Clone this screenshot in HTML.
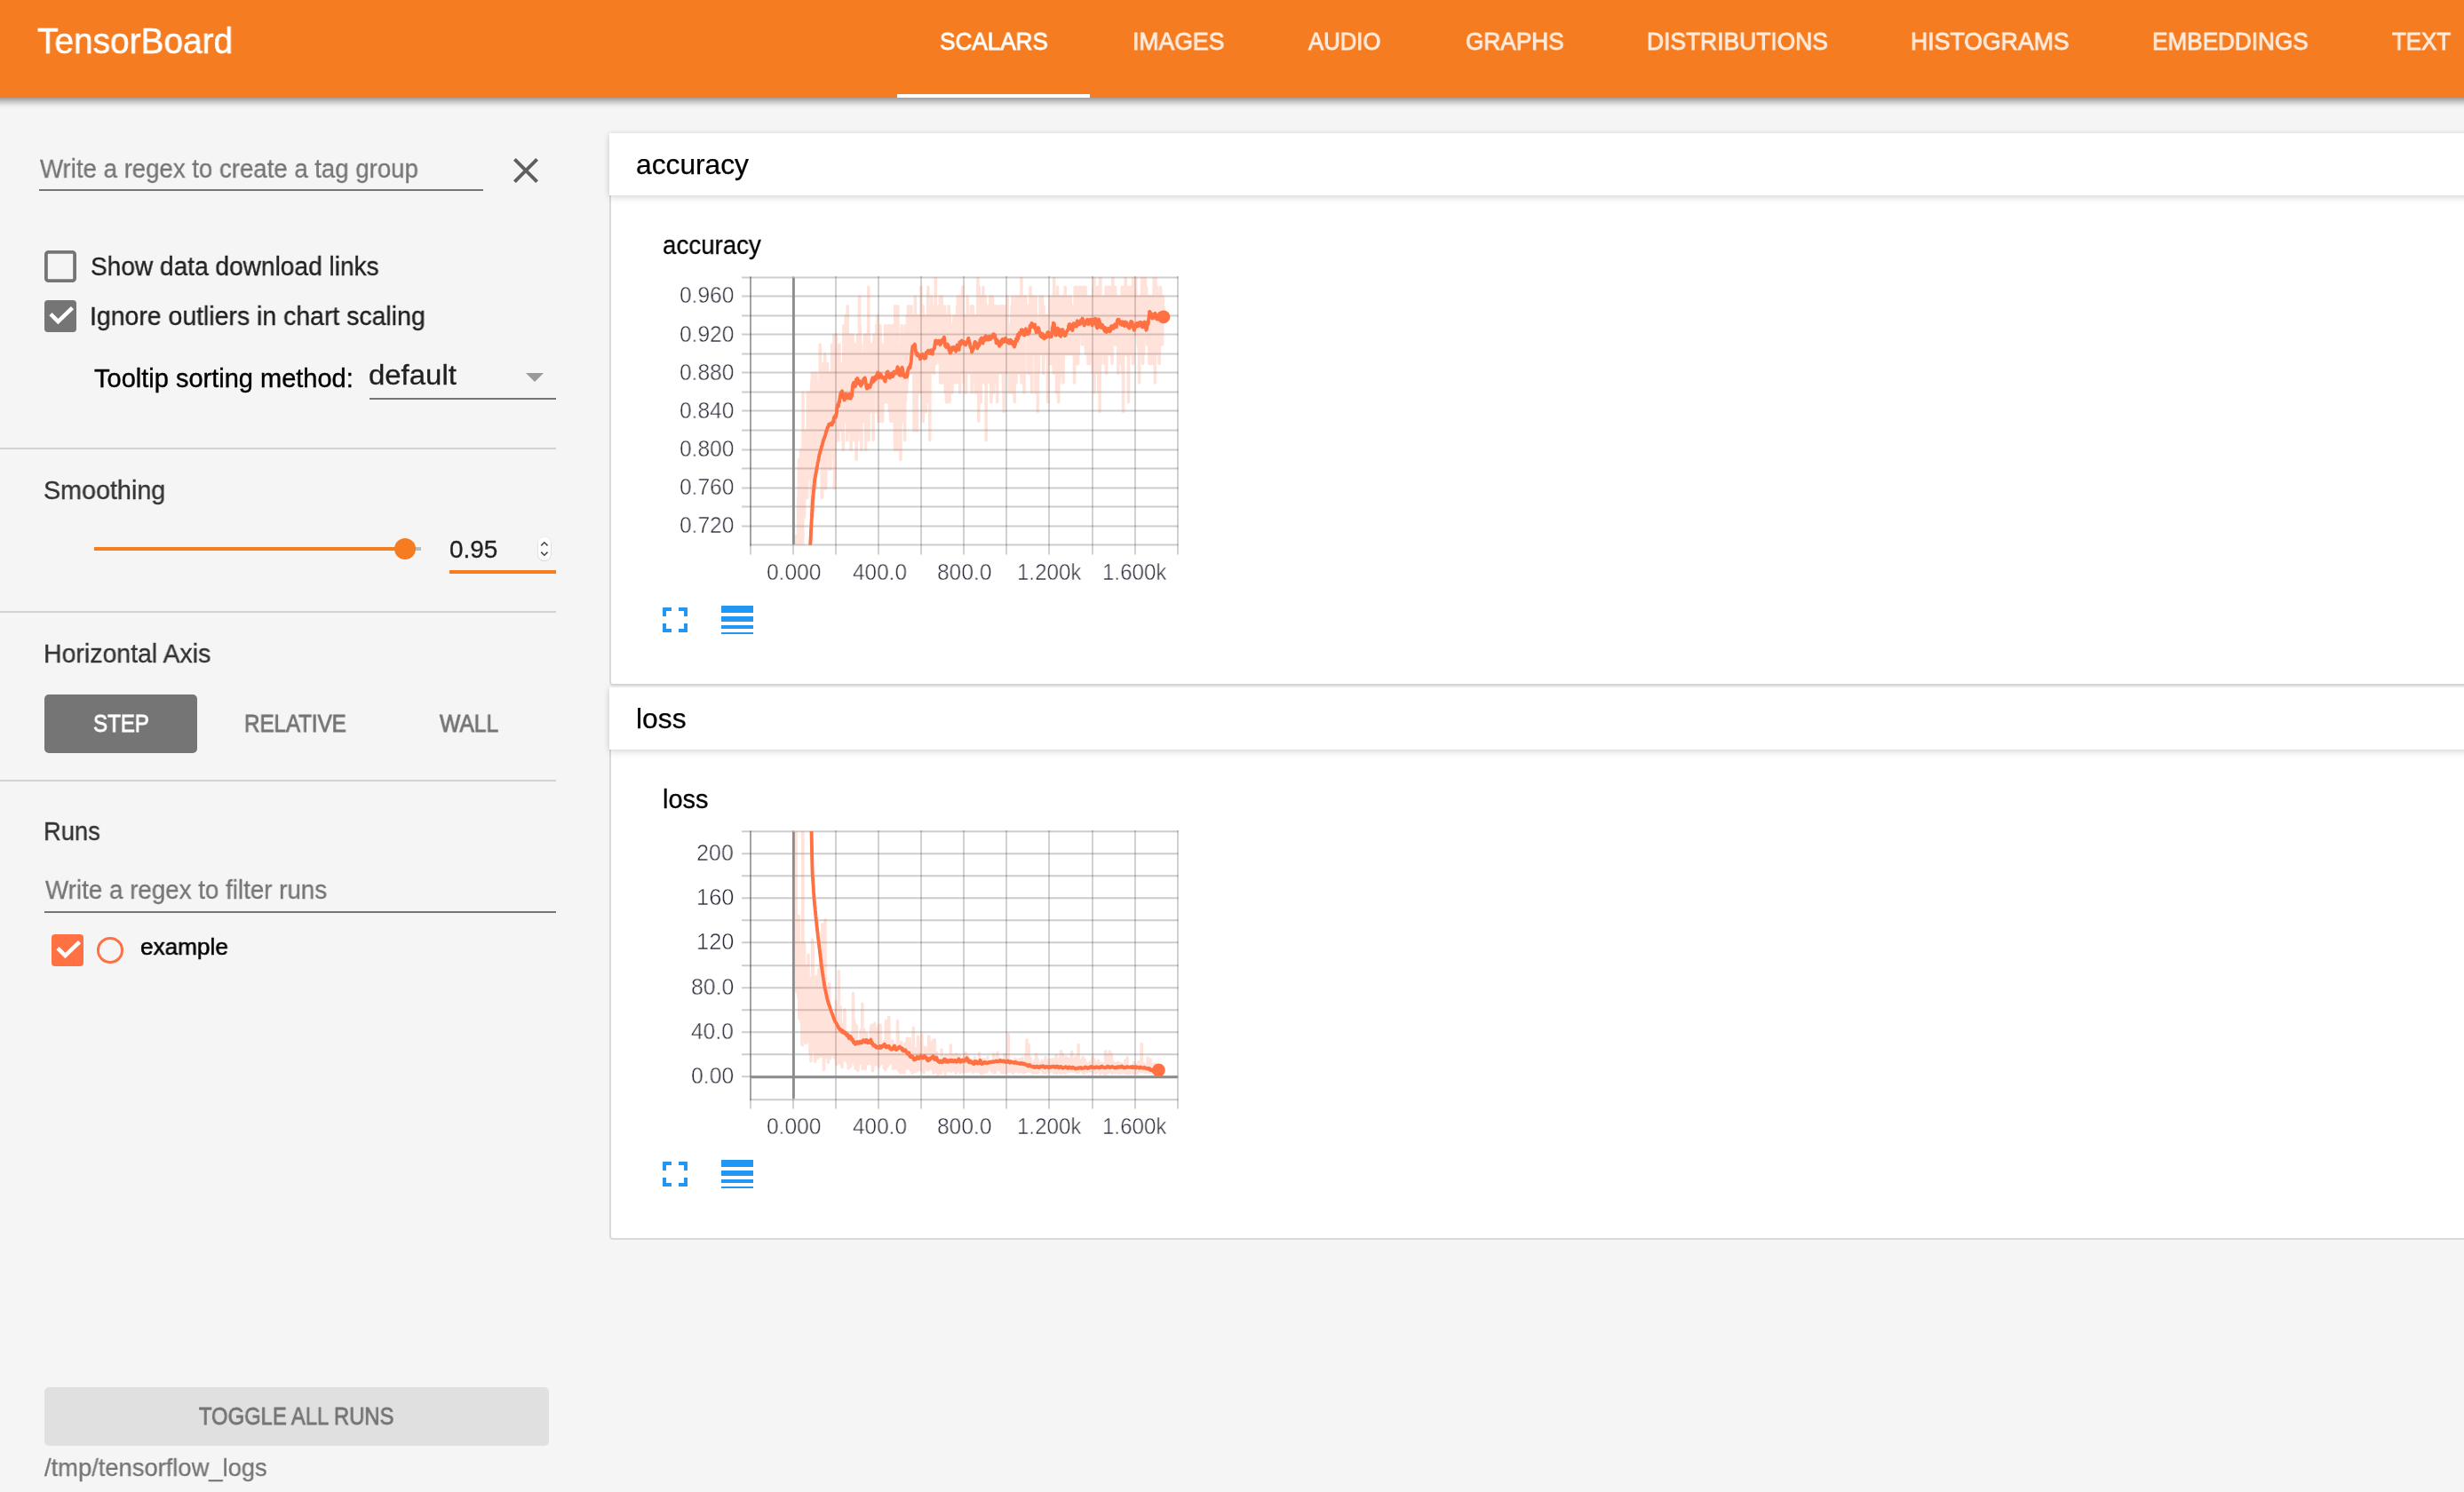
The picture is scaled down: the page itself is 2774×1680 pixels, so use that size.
<!DOCTYPE html>
<html><head><meta charset="utf-8"><title>TensorBoard</title>
<style>
html,body{margin:0;padding:0}
body{width:2774px;height:1680px;overflow:hidden;position:relative;background:#f5f5f5;font-family:"Liberation Sans",sans-serif}
.t{position:absolute;white-space:nowrap;line-height:1;transform-origin:0 50%;will-change:transform}
.b{position:absolute;display:block}
.b>svg{display:block}
</style></head><body>
<div class="t" style="left:45.15px;top:176.00px;font-size:29px;color:#757575;transform:scaleX(0.9514);-webkit-text-stroke:0.3px #757575;">Write a regex to create a tag group</div>
<div class="b" style="left:44px;top:213.3px;width:500px;height:2.2px;background:#757575"></div>
<svg class="b" style="left:574px;top:174px" width="36" height="36" viewBox="0 0 36 36"><path d="M5.4 5.4 L30.6 30.6 M30.6 5.4 L5.4 30.6" stroke="#5f5f5f" stroke-width="4" fill="none"/></svg>
<div class="b" style="left:50px;top:282px;width:36px;height:36px;"><svg width="36" height="36" viewBox="0 0 36 36"><rect x="1.9" y="1.9" width="32.2" height="32.2" rx="2.6" fill="none" stroke="#757575" stroke-width="3.8"/></svg></div>
<div class="t" style="left:101.91px;top:286.00px;font-size:29px;color:#212121;transform:scaleX(0.9681);-webkit-text-stroke:0.35px #212121;">Show data download links</div>
<div class="b" style="left:50px;top:338px;width:36px;height:36px;background:#757575;border-radius:4px"><svg width="36" height="36" viewBox="0 0 36 36"><path d="M7 15.7 L15.4 24.2 L31.5 8.7" stroke="#fff" stroke-width="4.5" fill="none"/></svg></div>
<div class="t" style="left:100.62px;top:342.00px;font-size:29px;color:#212121;transform:scaleX(0.9804);-webkit-text-stroke:0.35px #212121;">Ignore outliers in chart scaling</div>
<div class="t" style="left:105.87px;top:412.00px;font-size:29px;color:#000;-webkit-text-stroke:0.4px #000;">Tooltip sorting method:</div>
<div class="t" style="left:415.33px;top:407.00px;font-size:31px;color:#212121;transform:scaleX(1.0621);-webkit-text-stroke:0.3px #212121;">default</div>
<svg class="b" style="left:591.75px;top:420px" width="20" height="10" viewBox="0 0 20 10"><path d="M0 0H20L10 10Z" fill="#9a9a9a"/></svg>
<div class="b" style="left:416px;top:448px;width:210px;height:2px;background:#757575"></div>
<div class="b" style="left:0px;top:503.75px;width:626px;height:2px;background:#d3d3d3"></div>
<div class="b" style="left:0px;top:688px;width:626px;height:2px;background:#d3d3d3"></div>
<div class="b" style="left:0px;top:878px;width:626px;height:2px;background:#d3d3d3"></div>
<div class="t" style="left:49.38px;top:538.00px;font-size:29px;color:#333;transform:scaleX(0.9896);-webkit-text-stroke:0.35px #333;">Smoothing</div>
<div class="b" style="left:106.25px;top:616.2px;width:350px;height:3.6px;background:#f57c20"></div>
<div class="b" style="left:456px;top:616.2px;width:18px;height:3.6px;background:#bdbdbd"></div>
<div class="b" style="left:444px;top:606px;width:24px;height:24px;background:#f57c20;border-radius:50%"></div>
<div class="t" style="left:506.17px;top:605.00px;font-size:27.4px;color:#212121;transform:scaleX(1.0187);-webkit-text-stroke:0.3px #212121;">0.95</div>
<svg class="b" style="left:604px;top:603px" width="18" height="30" viewBox="0 0 18 30"><rect x="1.3" y="1.9" width="15.1" height="27.4" rx="7.5" fill="#000" fill-opacity="0.10"/><rect x="1.1" y="1.2" width="15.5" height="27.4" rx="7.7" fill="#000" fill-opacity="0.10"/><rect x="1.6" y="1.5" width="14.5" height="26.8" rx="7.25" fill="#fff"/><path d="M5.2 11.4 L8.85 7.8 L12.5 11.4 M5.2 18.6 L8.85 22.2 L12.5 18.6" stroke="#444" stroke-width="1.5" fill="none"/></svg>
<div class="b" style="left:506px;top:642px;width:120px;height:3.8px;background:#f57c20"></div>
<div class="t" style="left:48.90px;top:722.00px;font-size:29px;color:#333;transform:scaleX(0.9820);-webkit-text-stroke:0.35px #333;">Horizontal Axis</div>
<div class="b" style="left:50px;top:782px;width:172px;height:66px;background:#757575;border-radius:5px"></div>
<div class="t" style="left:104.87px;top:801.00px;font-size:27.2px;color:#fff;transform:scaleX(0.8859);-webkit-text-stroke:0.9px #fff;">STEP</div>
<div class="t" style="left:274.77px;top:801.00px;font-size:27.2px;color:#757575;transform:scaleX(0.8865);-webkit-text-stroke:0.9px #757575;">RELATIVE</div>
<div class="t" style="left:494.95px;top:801.00px;font-size:27.2px;color:#757575;transform:scaleX(0.9050);-webkit-text-stroke:0.9px #757575;">WALL</div>
<div class="t" style="left:48.99px;top:922.00px;font-size:29px;color:#333;transform:scaleX(0.9423);-webkit-text-stroke:0.35px #333;">Runs</div>
<div class="t" style="left:51.15px;top:988.00px;font-size:29px;color:#757575;transform:scaleX(0.9568);-webkit-text-stroke:0.3px #757575;">Write a regex to filter runs</div>
<div class="b" style="left:50px;top:1025.8px;width:576px;height:2.2px;background:#757575"></div>
<div class="b" style="left:58px;top:1052px;width:36px;height:36px;background:#ff7043;border-radius:4px"><svg width="36" height="36" viewBox="0 0 36 36"><path d="M7 15.7 L15.4 24.2 L31.5 8.7" stroke="#fff" stroke-width="4.5" fill="none"/></svg></div>
<div class="b" style="left:109px;top:1055px;width:30px;height:29.5px;box-sizing:border-box;border:3px solid #ff7043;border-radius:50%"></div>
<div class="t" style="left:157.73px;top:1053.00px;font-size:26.5px;color:#000;transform:scaleX(0.9866);-webkit-text-stroke:0.55px #000;">example</div>
<div class="b" style="left:50px;top:1562px;width:568px;height:66px;background:#e0e0e0;border-radius:5px"></div>
<div class="t" style="left:223.82px;top:1581.00px;font-size:27.2px;color:#757575;transform:scaleX(0.8746);-webkit-text-stroke:0.8px #757575;">TOGGLE ALL RUNS</div>
<div class="t" style="left:50.15px;top:1639.00px;font-size:28px;color:#757575;transform:scaleX(0.9761);-webkit-text-stroke:0.3px #757575;">/tmp/tensorflow_logs</div>
<div class="b" style="left:686px;top:220px;width:2100px;height:552px;box-sizing:border-box;background:#fff;border:2px solid #d9d9d9;border-top:none;border-radius:0 0 0 4px"></div>
<div class="b" style="left:686px;top:150px;width:2100px;height:70px;background:#fff;box-shadow:0 3px 8px rgba(0,0,0,0.12),0 0 6px rgba(0,0,0,0.08)"></div>
<div class="t" style="left:715.86px;top:170.00px;font-size:31.6px;color:#000;transform:scaleX(1.0045);-webkit-text-stroke:0.25px #000;">accuracy</div>
<div class="t" style="left:745.94px;top:262.00px;font-size:29px;color:#000;transform:scaleX(0.9549);-webkit-text-stroke:0.3px #000;">accuracy</div>
<svg class="b" style="left:736px;top:674px" width="48" height="48" viewBox="0 0 24 24"><path fill="#2196f3" d="M7 14H5v5h5v-2H7v-3zm-2-4h2V7h3V5H5v5zm12 7h-3v2h5v-5h-2v3zM14 5v2h3v3h2V5h-5z"/></svg>
<svg class="b" style="left:806px;top:674px" width="48" height="48" viewBox="0 0 24 24"><path fill="#2196f3" d="M3 17h18v-2H3v2zm0 3h18v-1H3v1zm0-7h18v-3H3v3zm0-9v4h18V4H3z"/></svg>
<div class="b" style="left:686px;top:844.3px;width:2100px;height:552px;box-sizing:border-box;background:#fff;border:2px solid #d9d9d9;border-top:none;border-radius:0 0 0 4px"></div>
<div class="b" style="left:686px;top:774.3px;width:2100px;height:70px;background:#fff;box-shadow:0 3px 8px rgba(0,0,0,0.12),0 0 6px rgba(0,0,0,0.08)"></div>
<div class="t" style="left:715.66px;top:794.00px;font-size:31.6px;color:#000;transform:scaleX(1.0059);-webkit-text-stroke:0.25px #000;">loss</div>
<div class="t" style="left:745.98px;top:886.00px;font-size:29px;color:#000;transform:scaleX(0.9944);-webkit-text-stroke:0.3px #000;">loss</div>
<svg class="b" style="left:736px;top:1298.3px" width="48" height="48" viewBox="0 0 24 24"><path fill="#2196f3" d="M7 14H5v5h5v-2H7v-3zm-2-4h2V7h3V5H5v5zm12 7h-3v2h5v-5h-2v3zM14 5v2h3v3h2V5h-5z"/></svg>
<svg class="b" style="left:806px;top:1298.3px" width="48" height="48" viewBox="0 0 24 24"><path fill="#2196f3" d="M3 17h18v-2H3v2zm0 3h18v-1H3v1zm0-7h18v-3H3v3zm0-9v4h18V4H3z"/></svg>
<svg class="b" style="left:800px;top:291.6px" width="700" height="400" viewBox="800 291.6 700 400"><defs><clipPath id="ca"><rect x="845.0" y="311.6" width="480.70000000000005" height="301.79999999999995"/></clipPath></defs><path d="M835.1 312H1326.6M835.1 333H1326.6M835.1 355H1326.6M835.1 376H1326.6M835.1 398H1326.6M835.1 419H1326.6M835.1 441H1326.6M835.1 462H1326.6M835.1 484H1326.6M835.1 506H1326.6M835.1 527H1326.6M835.1 549H1326.6M835.1 570H1326.6M835.1 592H1326.6M844.1 613H1326.6" stroke="#3c3c3c" stroke-opacity="0.255" stroke-width="2" fill="none"/><path d="M893 310.7V624.0M941 310.7V624.0M989 310.7V624.0M1037 310.7V624.0M1085 310.7V624.0M1133 310.7V624.0M1181 310.7V624.0M1230 310.7V624.0M1278 310.7V624.0M1326 310.7V624.0" stroke="#3c3c3c" stroke-opacity="0.235" stroke-width="2" fill="none"/><path d="M845 311.1V614.3" stroke="#3c3c3c" stroke-opacity="0.48" stroke-width="2" fill="none"/><path d="M845 614.3V624.0" stroke="#3c3c3c" stroke-opacity="0.235" stroke-width="2" fill="none"/><path d="M893.4 312.4V612.5" stroke="#8c8c8c" stroke-width="2.9" fill="none"/><g clip-path="url(#ca)"><path d="M893.2 1239.8L893.4 1164.2L893.7 1121.1L893.9 1131.9L894.2 1045.6L894.4 786.7L894.6 808.2L894.9 765.1L895.1 678.8L895.4 711.2L895.6 624.9L895.8 646.4L896.1 668.0L896.3 603.3L896.6 624.9L896.8 614.1L897.0 646.4L897.3 689.6L897.5 635.6L897.8 635.6L898.0 657.2L898.2 635.6L898.5 635.6L898.7 560.1L899.0 560.1L899.2 581.7L899.4 517.0L899.7 635.6L899.9 689.6L900.2 549.3L900.4 603.3L900.7 678.8L900.9 603.3L901.1 560.1L901.4 506.2L901.6 538.6L901.9 517.0L902.1 592.5L902.3 517.0L902.6 527.8L902.8 506.2L903.1 603.3L903.3 560.1L903.5 624.9L903.8 603.3L904.0 441.5L904.3 581.7L904.5 560.1L904.7 506.2L905.0 517.0L905.2 560.1L905.5 581.7L905.7 570.9L905.9 538.6L906.2 484.6L906.4 517.0L906.7 506.2L906.9 560.1L907.1 484.6L907.4 495.4L907.6 549.3L907.9 484.6L908.1 560.1L908.3 495.4L908.6 560.1L908.8 527.8L909.1 484.6L909.3 441.5L909.5 506.2L909.8 538.6L910.0 527.8L910.3 484.6L910.5 538.6L910.7 517.0L911.0 452.3L911.2 517.0L911.5 538.6L911.7 517.0L911.9 441.5L912.2 517.0L912.4 463.1L912.7 517.0L912.9 441.5L913.1 484.6L913.4 581.7L913.6 430.7L913.9 506.2L914.1 441.5L914.4 419.9L914.6 484.6L914.8 517.0L915.1 452.3L915.3 581.7L915.6 430.7L915.8 484.6L916.0 473.8L916.3 419.9L916.5 560.1L916.8 527.8L917.0 463.1L917.2 506.2L917.5 430.7L917.7 527.8L918.0 473.8L918.2 484.6L918.4 549.3L918.7 484.6L918.9 419.9L919.2 441.5L919.4 506.2L919.6 430.7L919.9 463.1L920.1 463.1L920.4 463.1L920.6 527.8L920.8 463.1L921.1 452.3L921.3 495.4L921.6 484.6L921.8 452.3L922.0 495.4L922.3 441.5L922.5 441.5L922.8 473.8L923.0 506.2L923.2 387.5L923.5 398.3L923.7 495.4L924.0 463.1L924.2 452.3L924.4 484.6L924.7 441.5L924.9 409.1L925.2 560.1L925.4 463.1L925.6 560.1L925.9 473.8L926.1 473.8L926.4 452.3L926.6 409.1L926.8 538.6L927.1 549.3L927.3 452.3L927.6 452.3L927.8 473.8L928.1 495.4L928.3 441.5L928.5 441.5L928.8 398.3L929.0 484.6L929.3 430.7L929.5 506.2L929.7 549.3L930.0 495.4L930.2 441.5L930.5 430.7L930.7 441.5L930.9 473.8L931.2 506.2L931.4 430.7L931.7 409.1L931.9 495.4L932.1 473.8L932.4 506.2L932.6 441.5L932.9 463.1L933.1 506.2L933.3 463.1L933.6 527.8L933.8 484.6L934.1 419.9L934.3 506.2L934.5 495.4L934.8 419.9L935.0 527.8L935.3 495.4L935.5 495.4L935.7 463.1L936.0 419.9L936.2 419.9L936.5 441.5L936.7 387.5L936.9 463.1L937.2 441.5L937.4 430.7L937.7 452.3L937.9 452.3L938.1 441.5L938.4 430.7L938.6 506.2L938.9 376.7L939.1 517.0L939.3 484.6L939.6 549.3L939.8 473.8L940.1 452.3L940.3 538.6L940.5 484.6L940.8 419.9L941.0 463.1L941.3 376.7L941.5 419.9L941.8 495.4L942.0 463.1L942.2 463.1L942.5 463.1L942.7 430.7L943.0 419.9L943.2 473.8L943.4 419.9L943.7 398.3L943.9 495.4L944.2 430.7L944.4 419.9L944.6 398.3L944.9 387.5L945.1 484.6L945.4 430.7L945.6 409.1L945.8 419.9L946.1 463.1L946.3 419.9L946.6 473.8L946.8 452.3L947.0 409.1L947.3 463.1L947.5 419.9L947.8 463.1L948.0 419.9L948.2 441.5L948.5 419.9L948.7 495.4L949.0 441.5L949.2 473.8L949.4 506.2L949.7 409.1L949.9 366.0L950.2 463.1L950.4 430.7L950.6 430.7L950.9 419.9L951.1 463.1L951.4 473.8L951.6 409.1L951.8 463.1L952.1 409.1L952.3 355.2L952.6 398.3L952.8 398.3L953.0 419.9L953.3 419.9L953.5 376.7L953.8 495.4L954.0 463.1L954.2 344.4L954.5 452.3L954.7 419.9L955.0 484.6L955.2 409.1L955.5 409.1L955.7 441.5L955.9 473.8L956.2 409.1L956.4 452.3L956.7 441.5L956.9 430.7L957.1 430.7L957.4 376.7L957.6 430.7L957.9 473.8L958.1 506.2L958.3 430.7L958.6 463.1L958.8 463.1L959.1 441.5L959.3 463.1L959.5 398.3L959.8 376.7L960.0 376.7L960.3 484.6L960.5 441.5L960.7 441.5L961.0 463.1L961.2 441.5L961.5 398.3L961.7 495.4L961.9 430.7L962.2 387.5L962.4 473.8L962.7 463.1L962.9 398.3L963.1 387.5L963.4 430.7L963.6 387.5L963.9 398.3L964.1 517.0L964.3 473.8L964.6 441.5L964.8 463.1L965.1 441.5L965.3 419.9L965.5 376.7L965.8 430.7L966.0 495.4L966.3 387.5L966.5 463.1L966.7 376.7L967.0 387.5L967.2 463.1L967.5 333.6L967.7 441.5L967.9 452.3L968.2 430.7L968.4 366.0L968.7 463.1L968.9 430.7L969.2 387.5L969.4 484.6L969.6 419.9L969.9 506.2L970.1 452.3L970.4 419.9L970.6 452.3L970.8 398.3L971.1 452.3L971.3 419.9L971.6 419.9L971.8 473.8L972.0 398.3L972.3 441.5L972.5 430.7L972.8 430.7L973.0 409.1L973.2 387.5L973.5 376.7L973.7 452.3L974.0 463.1L974.2 463.1L974.4 387.5L974.7 506.2L974.9 441.5L975.2 441.5L975.4 376.7L975.6 430.7L975.9 409.1L976.1 463.1L976.4 419.9L976.6 419.9L976.8 430.7L977.1 441.5L977.3 409.1L977.6 419.9L977.8 322.8L978.0 495.4L978.3 376.7L978.5 387.5L978.8 409.1L979.0 430.7L979.2 463.1L979.5 430.7L979.7 441.5L980.0 387.5L980.2 409.1L980.4 463.1L980.7 387.5L980.9 430.7L981.2 430.7L981.4 430.7L981.6 419.9L981.9 430.7L982.1 430.7L982.4 387.5L982.6 387.5L982.9 419.9L983.1 495.4L983.3 419.9L983.6 409.1L983.8 387.5L984.1 376.7L984.3 409.1L984.5 398.3L984.8 398.3L985.0 376.7L985.3 387.5L985.5 398.3L985.7 398.3L986.0 398.3L986.2 409.1L986.5 398.3L986.7 409.1L986.9 366.0L987.2 463.1L987.4 441.5L987.7 419.9L987.9 419.9L988.1 355.2L988.4 452.3L988.6 366.0L988.9 473.8L989.1 452.3L989.3 419.9L989.6 366.0L989.8 409.1L990.1 473.8L990.3 387.5L990.5 409.1L990.8 409.1L991.0 366.0L991.3 463.1L991.5 430.7L991.7 473.8L992.0 409.1L992.2 387.5L992.5 430.7L992.7 430.7L992.9 430.7L993.2 419.9L993.4 419.9L993.7 473.8L993.9 441.5L994.1 430.7L994.4 409.1L994.6 441.5L994.9 441.5L995.1 452.3L995.3 452.3L995.6 387.5L995.8 398.3L996.1 387.5L996.3 452.3L996.6 366.0L996.8 398.3L997.0 452.3L997.3 387.5L997.5 409.1L997.8 419.9L998.0 419.9L998.2 441.5L998.5 409.1L998.7 376.7L999.0 398.3L999.2 441.5L999.4 452.3L999.7 441.5L999.9 366.0L1000.2 398.3L1000.4 376.7L1000.6 387.5L1000.9 419.9L1001.1 409.1L1001.4 463.1L1001.6 441.5L1001.8 430.7L1002.1 387.5L1002.3 366.0L1002.6 473.8L1002.8 452.3L1003.0 387.5L1003.3 430.7L1003.5 409.1L1003.8 409.1L1004.0 376.7L1004.2 452.3L1004.5 398.3L1004.7 430.7L1005.0 398.3L1005.2 463.1L1005.4 473.8L1005.7 366.0L1005.9 409.1L1006.2 463.1L1006.4 441.5L1006.6 409.1L1006.9 419.9L1007.1 430.7L1007.4 484.6L1007.6 506.2L1007.8 344.4L1008.1 387.5L1008.3 441.5L1008.6 355.2L1008.8 409.1L1009.0 473.8L1009.3 409.1L1009.5 452.3L1009.8 355.2L1010.0 506.2L1010.3 430.7L1010.5 441.5L1010.7 344.4L1011.0 366.0L1011.2 409.1L1011.5 452.3L1011.7 473.8L1011.9 398.3L1012.2 398.3L1012.4 398.3L1012.7 419.9L1012.9 398.3L1013.1 441.5L1013.4 441.5L1013.6 419.9L1013.9 517.0L1014.1 473.8L1014.3 463.1L1014.6 387.5L1014.8 419.9L1015.1 366.0L1015.3 398.3L1015.5 452.3L1015.8 376.7L1016.0 398.3L1016.3 398.3L1016.5 409.1L1016.7 473.8L1017.0 430.7L1017.2 387.5L1017.5 409.1L1017.7 419.9L1017.9 452.3L1018.2 441.5L1018.4 376.7L1018.7 495.4L1018.9 387.5L1019.1 366.0L1019.4 452.3L1019.6 398.3L1019.9 430.7L1020.1 409.1L1020.3 430.7L1020.6 441.5L1020.8 430.7L1021.1 387.5L1021.3 430.7L1021.5 355.2L1021.8 398.3L1022.0 398.3L1022.3 366.0L1022.5 344.4L1022.7 419.9L1023.0 355.2L1023.2 376.7L1023.5 409.1L1023.7 398.3L1024.0 398.3L1024.2 419.9L1024.4 419.9L1024.7 366.0L1024.9 387.5L1025.2 366.0L1025.4 419.9L1025.6 398.3L1025.9 344.4L1026.1 376.7L1026.4 366.0L1026.6 355.2L1026.8 355.2L1027.1 387.5L1027.3 376.7L1027.6 387.5L1027.8 409.1L1028.0 376.7L1028.3 387.5L1028.5 366.0L1028.8 409.1L1029.0 484.6L1029.2 355.2L1029.5 366.0L1029.7 387.5L1030.0 398.3L1030.2 366.0L1030.4 333.6L1030.7 376.7L1030.9 463.1L1031.2 376.7L1031.4 419.9L1031.6 409.1L1031.9 409.1L1032.1 398.3L1032.4 484.6L1032.6 366.0L1032.8 409.1L1033.1 387.5L1033.3 355.2L1033.6 430.7L1033.8 398.3L1034.0 419.9L1034.3 441.5L1034.5 366.0L1034.8 398.3L1035.0 366.0L1035.2 387.5L1035.5 376.7L1035.7 409.1L1036.0 376.7L1036.2 376.7L1036.4 398.3L1036.7 387.5L1036.9 322.8L1037.2 409.1L1037.4 441.5L1037.7 430.7L1037.9 430.7L1038.1 409.1L1038.4 344.4L1038.6 430.7L1038.9 376.7L1039.1 344.4L1039.3 473.8L1039.6 376.7L1039.8 387.5L1040.1 366.0L1040.3 409.1L1040.5 355.2L1040.8 409.1L1041.0 355.2L1041.3 409.1L1041.5 387.5L1041.7 376.7L1042.0 387.5L1042.2 463.1L1042.5 398.3L1042.7 430.7L1042.9 409.1L1043.2 419.9L1043.4 452.3L1043.7 366.0L1043.9 376.7L1044.1 430.7L1044.4 398.3L1044.6 344.4L1044.9 322.8L1045.1 376.7L1045.3 344.4L1045.6 355.2L1045.8 366.0L1046.1 409.1L1046.3 376.7L1046.5 409.1L1046.8 495.4L1047.0 366.0L1047.3 355.2L1047.5 366.0L1047.7 419.9L1048.0 398.3L1048.2 376.7L1048.5 387.5L1048.7 333.6L1048.9 376.7L1049.2 398.3L1049.4 344.4L1049.7 355.2L1049.9 366.0L1050.1 387.5L1050.4 387.5L1050.6 366.0L1050.9 355.2L1051.1 387.5L1051.4 419.9L1051.6 398.3L1051.8 376.7L1052.1 398.3L1052.3 387.5L1052.6 344.4L1052.8 355.2L1053.0 366.0L1053.3 312.0L1053.5 409.1L1053.8 387.5L1054.0 409.1L1054.2 398.3L1054.5 355.2L1054.7 376.7L1055.0 376.7L1055.2 355.2L1055.4 366.0L1055.7 387.5L1055.9 366.0L1056.2 344.4L1056.4 344.4L1056.6 355.2L1056.9 376.7L1057.1 344.4L1057.4 387.5L1057.6 398.3L1057.8 409.1L1058.1 376.7L1058.3 333.6L1058.6 430.7L1058.8 430.7L1059.0 387.5L1059.3 409.1L1059.5 376.7L1059.8 366.0L1060.0 430.7L1060.2 333.6L1060.5 387.5L1060.7 398.3L1061.0 409.1L1061.2 366.0L1061.4 430.7L1061.7 398.3L1061.9 419.9L1062.2 409.1L1062.4 376.7L1062.6 419.9L1062.9 409.1L1063.1 398.3L1063.4 419.9L1063.6 398.3L1063.8 344.4L1064.1 419.9L1064.3 441.5L1064.6 441.5L1064.8 355.2L1065.1 376.7L1065.3 441.5L1065.5 452.3L1065.8 441.5L1066.0 409.1L1066.3 355.2L1066.5 452.3L1066.7 419.9L1067.0 409.1L1067.2 387.5L1067.5 409.1L1067.7 409.1L1067.9 409.1L1068.2 344.4L1068.4 398.3L1068.7 452.3L1068.9 366.0L1069.1 452.3L1069.4 355.2L1069.6 398.3L1069.9 376.7L1070.1 398.3L1070.3 398.3L1070.6 419.9L1070.8 430.7L1071.1 398.3L1071.3 419.9L1071.5 376.7L1071.8 366.0L1072.0 441.5L1072.3 387.5L1072.5 366.0L1072.7 366.0L1073.0 419.9L1073.2 398.3L1073.5 419.9L1073.7 387.5L1073.9 355.2L1074.2 387.5L1074.4 430.7L1074.7 376.7L1074.9 376.7L1075.1 366.0L1075.4 419.9L1075.6 398.3L1075.9 430.7L1076.1 387.5L1076.3 366.0L1076.6 409.1L1076.8 387.5L1077.1 387.5L1077.3 387.5L1077.5 344.4L1077.8 376.7L1078.0 366.0L1078.3 333.6L1078.5 387.5L1078.8 430.7L1079.0 376.7L1079.2 398.3L1079.5 419.9L1079.7 419.9L1080.0 387.5L1080.2 344.4L1080.4 333.6L1080.7 441.5L1080.9 376.7L1081.2 376.7L1081.4 376.7L1081.6 419.9L1081.9 366.0L1082.1 398.3L1082.4 376.7L1082.6 409.1L1082.8 387.5L1083.1 398.3L1083.3 344.4L1083.6 398.3L1083.8 322.8L1084.0 398.3L1084.3 355.2L1084.5 355.2L1084.8 355.2L1085.0 398.3L1085.2 430.7L1085.5 366.0L1085.7 398.3L1086.0 387.5L1086.2 419.9L1086.4 441.5L1086.7 355.2L1086.9 419.9L1087.2 430.7L1087.4 387.5L1087.6 441.5L1087.9 366.0L1088.1 366.0L1088.4 419.9L1088.6 398.3L1088.8 409.1L1089.1 333.6L1089.3 366.0L1089.6 376.7L1089.8 387.5L1090.0 409.1L1090.3 387.5L1090.5 398.3L1090.8 409.1L1091.0 398.3L1091.2 409.1L1091.5 355.2L1091.7 355.2L1092.0 398.3L1092.2 419.9L1092.5 409.1L1092.7 419.9L1092.9 387.5L1093.2 344.4L1093.4 366.0L1093.7 387.5L1093.9 387.5L1094.1 441.5L1094.4 366.0L1094.6 387.5L1094.9 409.1L1095.1 387.5L1095.3 344.4L1095.6 366.0L1095.8 398.3L1096.1 387.5L1096.3 419.9L1096.5 430.7L1096.8 398.3L1097.0 398.3L1097.3 398.3L1097.5 366.0L1097.7 419.9L1098.0 387.5L1098.2 441.5L1098.5 355.2L1098.7 398.3L1098.9 366.0L1099.2 366.0L1099.4 419.9L1099.7 387.5L1099.9 376.7L1100.1 387.5L1100.4 376.7L1100.6 344.4L1100.9 312.0L1101.1 398.3L1101.3 366.0L1101.6 398.3L1101.8 473.8L1102.1 322.8L1102.3 376.7L1102.5 355.2L1102.8 376.7L1103.0 387.5L1103.3 376.7L1103.5 387.5L1103.7 376.7L1104.0 333.6L1104.2 452.3L1104.5 366.0L1104.7 366.0L1104.9 376.7L1105.2 376.7L1105.4 333.6L1105.7 387.5L1105.9 387.5L1106.2 387.5L1106.4 355.2L1106.6 344.4L1106.9 322.8L1107.1 430.7L1107.4 376.7L1107.6 409.1L1107.8 398.3L1108.1 366.0L1108.3 419.9L1108.6 366.0L1108.8 409.1L1109.0 355.2L1109.3 333.6L1109.5 344.4L1109.8 409.1L1110.0 376.7L1110.2 495.4L1110.5 344.4L1110.7 376.7L1111.0 419.9L1111.2 398.3L1111.4 430.7L1111.7 344.4L1111.9 398.3L1112.2 366.0L1112.4 398.3L1112.6 419.9L1112.9 387.5L1113.1 344.4L1113.4 355.2L1113.6 366.0L1113.8 409.1L1114.1 387.5L1114.3 430.7L1114.6 430.7L1114.8 333.6L1115.0 387.5L1115.3 355.2L1115.5 376.7L1115.8 452.3L1116.0 398.3L1116.2 333.6L1116.5 398.3L1116.7 376.7L1117.0 387.5L1117.2 376.7L1117.4 333.6L1117.7 366.0L1117.9 398.3L1118.2 366.0L1118.4 409.1L1118.6 441.5L1118.9 419.9L1119.1 398.3L1119.4 355.2L1119.6 344.4L1119.9 366.0L1120.1 387.5L1120.3 430.7L1120.6 419.9L1120.8 344.4L1121.1 355.2L1121.3 344.4L1121.5 355.2L1121.8 376.7L1122.0 430.7L1122.3 376.7L1122.5 387.5L1122.7 452.3L1123.0 355.2L1123.2 366.0L1123.5 387.5L1123.7 409.1L1123.9 419.9L1124.2 409.1L1124.4 355.2L1124.7 344.4L1124.9 387.5L1125.1 366.0L1125.4 366.0L1125.6 366.0L1125.9 409.1L1126.1 366.0L1126.3 376.7L1126.6 355.2L1126.8 344.4L1127.1 376.7L1127.3 419.9L1127.5 409.1L1127.8 344.4L1128.0 398.3L1128.3 366.0L1128.5 376.7L1128.7 344.4L1129.0 355.2L1129.2 344.4L1129.5 441.5L1129.7 355.2L1129.9 398.3L1130.2 463.1L1130.4 366.0L1130.7 419.9L1130.9 376.7L1131.1 419.9L1131.4 419.9L1131.6 344.4L1131.9 344.4L1132.1 409.1L1132.3 376.7L1132.6 387.5L1132.8 376.7L1133.1 387.5L1133.3 398.3L1133.5 387.5L1133.8 409.1L1134.0 344.4L1134.3 333.6L1134.5 419.9L1134.8 387.5L1135.0 366.0L1135.2 387.5L1135.5 366.0L1135.7 366.0L1136.0 398.3L1136.2 441.5L1136.4 387.5L1136.7 366.0L1136.9 387.5L1137.2 387.5L1137.4 419.9L1137.6 376.7L1137.9 366.0L1138.1 387.5L1138.4 366.0L1138.6 366.0L1138.8 355.2L1139.1 344.4L1139.3 398.3L1139.6 441.5L1139.8 376.7L1140.0 333.6L1140.3 355.2L1140.5 366.0L1140.8 366.0L1141.0 344.4L1141.2 366.0L1141.5 355.2L1141.7 398.3L1142.0 376.7L1142.2 452.3L1142.4 376.7L1142.7 355.2L1142.9 344.4L1143.2 387.5L1143.4 419.9L1143.6 366.0L1143.9 333.6L1144.1 430.7L1144.4 355.2L1144.6 376.7L1144.8 355.2L1145.1 355.2L1145.3 376.7L1145.6 387.5L1145.8 355.2L1146.0 344.4L1146.3 387.5L1146.5 376.7L1146.8 355.2L1147.0 344.4L1147.2 333.6L1147.5 344.4L1147.7 419.9L1148.0 366.0L1148.2 366.0L1148.5 355.2L1148.7 344.4L1148.9 344.4L1149.2 366.0L1149.4 366.0L1149.7 387.5L1149.9 312.0L1150.1 430.7L1150.4 387.5L1150.6 366.0L1150.9 398.3L1151.1 409.1L1151.3 344.4L1151.6 333.6L1151.8 366.0L1152.1 355.2L1152.3 376.7L1152.5 344.4L1152.8 355.2L1153.0 441.5L1153.3 344.4L1153.5 376.7L1153.7 366.0L1154.0 366.0L1154.2 333.6L1154.5 376.7L1154.7 333.6L1154.9 344.4L1155.2 376.7L1155.4 355.2L1155.7 344.4L1155.9 344.4L1156.1 366.0L1156.4 344.4L1156.6 355.2L1156.9 355.2L1157.1 419.9L1157.3 344.4L1157.6 344.4L1157.8 344.4L1158.1 344.4L1158.3 366.0L1158.5 355.2L1158.8 419.9L1159.0 376.7L1159.3 376.7L1159.5 376.7L1159.7 366.0L1160.0 322.8L1160.2 355.2L1160.5 355.2L1160.7 344.4L1160.9 398.3L1161.2 387.5L1161.4 409.1L1161.7 441.5L1161.9 366.0L1162.2 355.2L1162.4 333.6L1162.6 376.7L1162.9 344.4L1163.1 333.6L1163.4 355.2L1163.6 376.7L1163.8 344.4L1164.1 376.7L1164.3 398.3L1164.6 387.5L1164.8 355.2L1165.0 398.3L1165.3 376.7L1165.5 398.3L1165.8 333.6L1166.0 441.5L1166.2 333.6L1166.5 409.1L1166.7 355.2L1167.0 355.2L1167.2 366.0L1167.4 387.5L1167.7 398.3L1167.9 366.0L1168.2 376.7L1168.4 463.1L1168.6 376.7L1168.9 398.3L1169.1 366.0L1169.4 419.9L1169.6 366.0L1169.8 366.0L1170.1 398.3L1170.3 387.5L1170.6 387.5L1170.8 398.3L1171.0 333.6L1171.3 355.2L1171.5 366.0L1171.8 376.7L1172.0 355.2L1172.2 376.7L1172.5 355.2L1172.7 376.7L1173.0 376.7L1173.2 366.0L1173.4 333.6L1173.7 387.5L1173.9 387.5L1174.2 344.4L1174.4 409.1L1174.6 419.9L1174.9 409.1L1175.1 344.4L1175.4 387.5L1175.6 398.3L1175.9 355.2L1176.1 366.0L1176.3 366.0L1176.6 387.5L1176.8 366.0L1177.1 355.2L1177.3 366.0L1177.5 387.5L1177.8 398.3L1178.0 376.7L1178.3 387.5L1178.5 355.2L1178.7 366.0L1179.0 398.3L1179.2 387.5L1179.5 366.0L1179.7 452.3L1179.9 355.2L1180.2 387.5L1180.4 409.1L1180.7 355.2L1180.9 398.3L1181.1 387.5L1181.4 366.0L1181.6 387.5L1181.9 333.6L1182.1 376.7L1182.3 344.4L1182.6 409.1L1182.8 387.5L1183.1 387.5L1183.3 398.3L1183.5 387.5L1183.8 409.1L1184.0 376.7L1184.3 409.1L1184.5 344.4L1184.7 409.1L1185.0 376.7L1185.2 409.1L1185.5 355.2L1185.7 333.6L1185.9 355.2L1186.2 419.9L1186.4 376.7L1186.7 301.2L1186.9 376.7L1187.1 409.1L1187.4 344.4L1187.6 366.0L1187.9 366.0L1188.1 387.5L1188.3 344.4L1188.6 409.1L1188.8 398.3L1189.1 366.0L1189.3 355.2L1189.6 441.5L1189.8 376.7L1190.0 333.6L1190.3 333.6L1190.5 322.8L1190.8 355.2L1191.0 376.7L1191.2 376.7L1191.5 344.4L1191.7 452.3L1192.0 398.3L1192.2 398.3L1192.4 376.7L1192.7 409.1L1192.9 430.7L1193.2 409.1L1193.4 419.9L1193.6 333.6L1193.9 355.2L1194.1 376.7L1194.4 387.5L1194.6 376.7L1194.8 366.0L1195.1 376.7L1195.3 398.3L1195.6 376.7L1195.8 376.7L1196.0 355.2L1196.3 333.6L1196.5 355.2L1196.8 398.3L1197.0 430.7L1197.2 366.0L1197.5 387.5L1197.7 344.4L1198.0 398.3L1198.2 376.7L1198.4 387.5L1198.7 355.2L1198.9 355.2L1199.2 322.8L1199.4 398.3L1199.6 355.2L1199.9 355.2L1200.1 398.3L1200.4 366.0L1200.6 344.4L1200.8 333.6L1201.1 344.4L1201.3 398.3L1201.6 355.2L1201.8 355.2L1202.0 387.5L1202.3 387.5L1202.5 387.5L1202.8 344.4L1203.0 366.0L1203.3 355.2L1203.5 398.3L1203.7 333.6L1204.0 366.0L1204.2 355.2L1204.5 376.7L1204.7 387.5L1204.9 376.7L1205.2 333.6L1205.4 376.7L1205.7 366.0L1205.9 344.4L1206.1 366.0L1206.4 398.3L1206.6 355.2L1206.9 376.7L1207.1 344.4L1207.3 376.7L1207.6 398.3L1207.8 366.0L1208.1 366.0L1208.3 344.4L1208.5 344.4L1208.8 366.0L1209.0 376.7L1209.3 376.7L1209.5 430.7L1209.7 366.0L1210.0 398.3L1210.2 322.8L1210.5 376.7L1210.7 376.7L1210.9 355.2L1211.2 355.2L1211.4 322.8L1211.7 398.3L1211.9 409.1L1212.1 322.8L1212.4 409.1L1212.6 376.7L1212.9 366.0L1213.1 355.2L1213.3 344.4L1213.6 409.1L1213.8 366.0L1214.1 376.7L1214.3 398.3L1214.5 333.6L1214.8 333.6L1215.0 366.0L1215.3 322.8L1215.5 376.7L1215.7 344.4L1216.0 322.8L1216.2 322.8L1216.5 376.7L1216.7 355.2L1217.0 344.4L1217.2 333.6L1217.4 344.4L1217.7 333.6L1217.9 333.6L1218.2 387.5L1218.4 344.4L1218.6 355.2L1218.9 387.5L1219.1 366.0L1219.4 322.8L1219.6 366.0L1219.8 344.4L1220.1 333.6L1220.3 344.4L1220.6 333.6L1220.8 387.5L1221.0 376.7L1221.3 366.0L1221.5 366.0L1221.8 366.0L1222.0 322.8L1222.2 355.2L1222.5 398.3L1222.7 387.5L1223.0 355.2L1223.2 344.4L1223.4 376.7L1223.7 344.4L1223.9 355.2L1224.2 344.4L1224.4 355.2L1224.6 333.6L1224.9 376.7L1225.1 409.1L1225.4 387.5L1225.6 376.7L1225.8 366.0L1226.1 366.0L1226.3 387.5L1226.6 409.1L1226.8 344.4L1227.0 366.0L1227.3 344.4L1227.5 344.4L1227.8 355.2L1228.0 398.3L1228.2 333.6L1228.5 355.2L1228.7 355.2L1229.0 366.0L1229.2 355.2L1229.4 376.7L1229.7 355.2L1229.9 344.4L1230.2 419.9L1230.4 376.7L1230.7 333.6L1230.9 322.8L1231.1 376.7L1231.4 387.5L1231.6 366.0L1231.9 301.2L1232.1 441.5L1232.3 355.2L1232.6 398.3L1232.8 344.4L1233.1 419.9L1233.3 419.9L1233.5 355.2L1233.8 344.4L1234.0 344.4L1234.3 355.2L1234.5 344.4L1234.7 387.5L1235.0 355.2L1235.2 355.2L1235.5 322.8L1235.7 322.8L1235.9 322.8L1236.2 366.0L1236.4 387.5L1236.7 355.2L1236.9 441.5L1237.1 387.5L1237.4 387.5L1237.6 344.4L1237.9 366.0L1238.1 463.1L1238.3 366.0L1238.6 322.8L1238.8 301.2L1239.1 355.2L1239.3 409.1L1239.5 355.2L1239.8 387.5L1240.0 344.4L1240.3 366.0L1240.5 366.0L1240.7 366.0L1241.0 376.7L1241.2 366.0L1241.5 398.3L1241.7 387.5L1241.9 344.4L1242.2 344.4L1242.4 344.4L1242.7 333.6L1242.9 333.6L1243.1 376.7L1243.4 409.1L1243.6 398.3L1243.9 344.4L1244.1 398.3L1244.4 344.4L1244.6 333.6L1244.8 366.0L1245.1 322.8L1245.3 387.5L1245.6 419.9L1245.8 344.4L1246.0 355.2L1246.3 387.5L1246.5 398.3L1246.8 366.0L1247.0 387.5L1247.2 376.7L1247.5 376.7L1247.7 322.8L1248.0 387.5L1248.2 398.3L1248.4 366.0L1248.7 333.6L1248.9 322.8L1249.2 355.2L1249.4 376.7L1249.6 344.4L1249.9 322.8L1250.1 376.7L1250.4 398.3L1250.6 387.5L1250.8 387.5L1251.1 355.2L1251.3 376.7L1251.6 333.6L1251.8 333.6L1252.0 409.1L1252.3 344.4L1252.5 344.4L1252.8 312.0L1253.0 333.6L1253.2 322.8L1253.5 333.6L1253.7 376.7L1254.0 366.0L1254.2 376.7L1254.4 344.4L1254.7 366.0L1254.9 333.6L1255.2 355.2L1255.4 387.5L1255.6 322.8L1255.9 344.4L1256.1 387.5L1256.4 333.6L1256.6 387.5L1256.8 376.7L1257.1 387.5L1257.3 333.6L1257.6 376.7L1257.8 387.5L1258.1 366.0L1258.3 333.6L1258.5 355.2L1258.8 419.9L1259.0 344.4L1259.3 398.3L1259.5 366.0L1259.7 366.0L1260.0 366.0L1260.2 355.2L1260.5 344.4L1260.7 355.2L1260.9 355.2L1261.2 333.6L1261.4 355.2L1261.7 366.0L1261.9 355.2L1262.1 366.0L1262.4 409.1L1262.6 333.6L1262.9 366.0L1263.1 409.1L1263.3 322.8L1263.6 419.9L1263.8 376.7L1264.1 366.0L1264.3 355.2L1264.5 463.1L1264.8 355.2L1265.0 355.2L1265.3 355.2L1265.5 322.8L1265.7 366.0L1266.0 398.3L1266.2 355.2L1266.5 366.0L1266.7 322.8L1266.9 344.4L1267.2 312.0L1267.4 398.3L1267.7 366.0L1267.9 344.4L1268.1 366.0L1268.4 344.4L1268.6 387.5L1268.9 322.8L1269.1 344.4L1269.3 344.4L1269.6 398.3L1269.8 387.5L1270.1 322.8L1270.3 366.0L1270.5 452.3L1270.8 376.7L1271.0 344.4L1271.3 344.4L1271.5 366.0L1271.8 355.2L1272.0 344.4L1272.2 376.7L1272.5 344.4L1272.7 398.3L1273.0 322.8L1273.2 387.5L1273.4 376.7L1273.7 366.0L1273.9 376.7L1274.2 344.4L1274.4 376.7L1274.6 366.0L1274.9 355.2L1275.1 333.6L1275.4 409.1L1275.6 344.4L1275.8 312.0L1276.1 322.8L1276.3 344.4L1276.6 355.2L1276.8 355.2L1277.0 355.2L1277.3 376.7L1277.5 344.4L1277.8 366.0L1278.0 355.2L1278.2 333.6L1278.5 366.0L1278.7 312.0L1279.0 366.0L1279.2 333.6L1279.4 333.6L1279.7 355.2L1279.9 355.2L1280.2 333.6L1280.4 333.6L1280.6 366.0L1280.9 344.4L1281.1 387.5L1281.4 344.4L1281.6 355.2L1281.8 366.0L1282.1 398.3L1282.3 387.5L1282.6 430.7L1282.8 333.6L1283.0 366.0L1283.3 344.4L1283.5 344.4L1283.8 387.5L1284.0 344.4L1284.2 398.3L1284.5 376.7L1284.7 366.0L1285.0 333.6L1285.2 376.7L1285.5 387.5L1285.7 312.0L1285.9 387.5L1286.2 376.7L1286.4 387.5L1286.7 409.1L1286.9 387.5L1287.1 366.0L1287.4 333.6L1287.6 398.3L1287.9 366.0L1288.1 355.2L1288.3 366.0L1288.6 333.6L1288.8 366.0L1289.1 355.2L1289.3 312.0L1289.5 366.0L1289.8 333.6L1290.0 355.2L1290.3 366.0L1290.5 322.8L1290.7 344.4L1291.0 355.2L1291.2 355.2L1291.5 387.5L1291.7 344.4L1291.9 387.5L1292.2 355.2L1292.4 355.2L1292.7 333.6L1292.9 366.0L1293.1 333.6L1293.4 333.6L1293.6 366.0L1293.9 409.1L1294.1 333.6L1294.3 376.7L1294.6 333.6L1294.8 355.2L1295.1 366.0L1295.3 333.6L1295.5 355.2L1295.8 376.7L1296.0 409.1L1296.3 366.0L1296.5 333.6L1296.7 387.5L1297.0 387.5L1297.2 355.2L1297.5 344.4L1297.7 409.1L1297.9 355.2L1298.2 355.2L1298.4 376.7L1298.7 355.2L1298.9 355.2L1299.2 312.0L1299.4 333.6L1299.6 312.0L1299.9 333.6L1300.1 398.3L1300.4 430.7L1300.6 290.4L1300.8 344.4L1301.1 312.0L1301.3 344.4L1301.6 376.7L1301.8 387.5L1302.0 366.0L1302.3 398.3L1302.5 333.6L1302.8 322.8L1303.0 366.0L1303.2 366.0L1303.5 333.6L1303.7 355.2L1304.0 355.2L1304.2 355.2L1304.4 376.7L1304.7 333.6L1304.9 409.1L1305.2 409.1L1305.4 355.2L1305.6 333.6L1305.9 344.4L1306.1 355.2L1306.4 376.7L1306.6 322.8L1306.8 366.0L1307.1 376.7L1307.3 333.6L1307.6 344.4L1307.8 355.2L1308.0 333.6L1308.3 333.6L1308.5 387.5L1308.8 355.2L1309.0 355.2L1309.2 333.6L1309.5 355.2L1309.7 355.2L1310.0 344.4" stroke="#ff7043" stroke-opacity="0.2" stroke-width="3.5" fill="none" stroke-linejoin="round"/><path d="M907.6 676.7L907.9 673.4L908.1 670.2L908.3 666.9L908.6 663.6L908.8 660.3L909.1 657.0L909.3 653.7L909.5 650.4L909.8 647.2L910.0 643.9L910.3 640.6L910.5 637.3L910.7 634.0L911.0 630.7L911.2 627.4L911.5 624.2L911.7 620.9L911.9 617.6L912.2 614.3L912.4 609.9L912.7 605.2L912.9 600.5L913.1 595.8L913.4 591.0L913.6 586.4L913.9 582.3L914.1 578.2L914.4 574.1L914.6 570.0L914.8 565.8L915.1 561.7L915.3 558.9L915.6 556.5L915.8 554.1L916.0 551.6L916.3 549.3L916.5 546.9L916.8 544.3L917.0 542.0L917.2 539.7L917.5 538.1L917.7 537.1L918.0 535.9L918.2 534.6L918.4 533.2L918.7 532.1L918.9 530.7L919.2 529.4L919.4 527.9L919.6 526.4L919.9 525.1L920.1 524.2L920.4 522.4L920.6 520.7L920.8 519.7L921.1 519.1L921.3 518.2L921.6 516.6L921.8 514.7L922.0 513.8L922.3 512.5L922.5 511.1L922.8 510.5L923.0 509.9L923.2 508.9L923.5 508.0L923.7 507.1L924.0 506.7L924.2 505.9L924.4 505.0L924.7 504.1L924.9 502.3L925.2 502.0L925.4 501.7L925.6 501.3L925.9 499.5L926.1 498.4L926.4 498.2L926.6 496.4L926.8 495.7L927.1 495.6L927.3 494.1L927.6 494.1L927.8 493.5L928.1 492.5L928.3 491.8L928.5 491.3L928.8 490.5L929.0 490.3L929.3 489.0L929.5 487.7L929.7 487.5L930.0 486.6L930.2 485.0L930.5 484.6L930.7 484.9L930.9 484.0L931.2 482.3L931.4 481.7L931.7 481.1L931.9 480.3L932.1 481.0L932.4 479.6L932.6 480.2L932.9 478.6L933.1 477.3L933.3 477.3L933.6 477.8L933.8 478.0L934.1 477.8L934.3 477.5L934.5 477.2L934.8 477.3L935.0 476.6L935.3 476.4L935.5 476.5L935.7 476.1L936.0 476.4L936.2 476.5L936.5 478.1L936.7 477.8L936.9 476.8L937.2 475.9L937.4 475.1L937.7 475.3L937.9 474.2L938.1 473.8L938.4 475.1L938.6 471.5L938.9 469.6L939.1 469.5L939.3 469.4L939.6 469.2L939.8 468.3L940.1 468.6L940.3 468.5L940.5 467.4L940.8 469.4L941.0 468.8L941.3 467.1L941.5 466.0L941.8 464.6L942.0 463.7L942.2 459.2L942.5 457.8L942.7 458.3L943.0 455.9L943.2 455.1L943.4 455.6L943.7 455.9L943.9 457.1L944.2 453.9L944.4 452.8L944.6 451.7L944.9 451.8L945.1 452.5L945.4 448.0L945.6 448.7L945.8 445.8L946.1 445.8L946.3 442.9L946.6 442.3L946.8 443.0L947.0 441.9L947.3 441.2L947.5 441.5L947.8 440.9L948.0 439.9L948.2 441.1L948.5 442.8L948.7 442.9L949.0 447.0L949.2 445.7L949.4 447.1L949.7 447.0L949.9 447.4L950.2 448.6L950.4 449.1L950.6 450.2L950.9 448.3L951.1 446.6L951.4 447.8L951.6 446.8L951.8 445.2L952.1 443.1L952.3 444.7L952.6 445.7L952.8 447.6L953.0 446.1L953.3 445.9L953.5 444.2L953.8 445.1L954.0 447.0L954.2 445.5L954.5 447.2L954.7 448.0L955.0 447.2L955.2 444.1L955.5 445.5L955.7 444.8L955.9 443.4L956.2 443.6L956.4 443.9L956.7 445.7L956.9 443.9L957.1 445.1L957.4 446.7L957.6 448.3L957.9 447.5L958.1 446.1L958.3 446.8L958.6 445.7L958.8 444.5L959.1 445.1L959.3 443.3L959.5 438.7L959.8 436.9L960.0 433.3L960.3 433.5L960.5 433.0L960.7 431.3L961.0 430.6L961.2 431.0L961.5 430.4L961.7 431.4L961.9 430.5L962.2 431.1L962.4 432.9L962.7 434.9L962.9 433.7L963.1 434.5L963.4 431.5L963.6 429.8L963.9 426.9L964.1 428.3L964.3 426.6L964.6 426.6L964.8 426.4L965.1 426.3L965.3 425.6L965.5 425.9L965.8 428.4L966.0 428.6L966.3 429.7L966.5 431.4L966.7 431.3L967.0 429.8L967.2 429.4L967.5 431.0L967.7 429.1L967.9 428.6L968.2 430.4L968.4 431.8L968.7 432.2L968.9 433.6L969.2 434.1L969.4 432.9L969.6 431.1L969.9 430.6L970.1 432.5L970.4 432.3L970.6 431.5L970.8 431.0L971.1 429.5L971.3 429.9L971.6 428.7L971.8 429.7L972.0 427.0L972.3 428.0L972.5 427.6L972.8 425.7L973.0 427.3L973.2 427.3L973.5 425.2L973.7 425.1L974.0 426.5L974.2 426.8L974.4 428.8L974.7 430.5L974.9 432.1L975.2 433.0L975.4 435.3L975.6 436.4L975.9 437.2L976.1 434.4L976.4 435.9L976.6 437.1L976.8 436.0L977.1 434.6L977.3 436.5L977.6 433.2L977.8 433.2L978.0 435.8L978.3 433.8L978.5 434.1L978.8 436.0L979.0 435.2L979.2 435.2L979.5 435.6L979.7 433.5L980.0 432.7L980.2 432.5L980.4 432.9L980.7 432.1L980.9 431.1L981.2 429.0L981.4 427.8L981.6 428.6L981.9 428.2L982.1 426.5L982.4 425.0L982.6 428.3L982.9 429.3L983.1 429.6L983.3 425.5L983.6 426.0L983.8 426.2L984.1 428.1L984.3 428.2L984.5 427.5L984.8 427.6L985.0 424.3L985.3 425.3L985.5 425.2L985.7 423.6L986.0 424.8L986.2 426.5L986.5 424.0L986.7 422.5L986.9 422.4L987.2 422.2L987.4 421.3L987.7 419.6L987.9 422.2L988.1 423.3L988.4 421.3L988.6 419.0L988.9 421.0L989.1 421.9L989.3 424.1L989.6 425.1L989.8 423.9L990.1 424.2L990.3 421.2L990.5 420.4L990.8 420.5L991.0 421.4L991.3 420.5L991.5 420.6L991.7 421.5L992.0 422.3L992.2 423.3L992.5 423.7L992.7 423.5L992.9 424.8L993.2 425.1L993.4 424.2L993.7 423.8L993.9 424.1L994.1 424.3L994.4 424.8L994.6 425.1L994.9 425.8L995.1 426.1L995.3 424.8L995.6 425.9L995.8 427.8L996.1 428.6L996.3 428.4L996.6 429.1L996.8 427.8L997.0 425.3L997.3 425.4L997.5 424.2L997.8 425.3L998.0 423.7L998.2 420.1L998.5 418.8L998.7 421.2L999.0 420.7L999.2 418.8L999.4 418.0L999.7 418.9L999.9 419.6L1000.2 419.9L1000.4 421.8L1000.6 422.4L1000.9 422.0L1001.1 422.3L1001.4 424.1L1001.6 424.7L1001.8 425.2L1002.1 422.7L1002.3 421.7L1002.6 421.8L1002.8 420.6L1003.0 421.2L1003.3 421.1L1003.5 421.4L1003.8 420.2L1004.0 422.8L1004.2 423.5L1004.5 422.1L1004.7 421.2L1005.0 423.7L1005.2 422.1L1005.4 422.3L1005.7 422.5L1005.9 421.5L1006.2 418.9L1006.4 418.3L1006.6 418.1L1006.9 419.0L1007.1 419.4L1007.4 418.8L1007.6 419.3L1007.8 419.5L1008.1 419.4L1008.3 419.4L1008.6 419.1L1008.8 420.0L1009.0 418.5L1009.3 417.7L1009.5 417.9L1009.8 416.1L1010.0 415.8L1010.3 413.3L1010.5 412.9L1010.7 414.2L1011.0 415.5L1011.2 416.0L1011.5 416.3L1011.7 415.1L1011.9 418.4L1012.2 419.8L1012.4 421.9L1012.7 421.3L1012.9 421.5L1013.1 419.5L1013.4 421.0L1013.6 422.4L1013.9 419.8L1014.1 419.8L1014.3 420.8L1014.6 418.6L1014.8 416.4L1015.1 415.3L1015.3 414.8L1015.5 413.4L1015.8 414.1L1016.0 415.1L1016.3 416.6L1016.5 418.0L1016.7 420.4L1017.0 422.7L1017.2 421.8L1017.5 421.9L1017.7 421.3L1017.9 420.8L1018.2 421.7L1018.4 422.6L1018.7 424.3L1018.9 423.0L1019.1 422.3L1019.4 423.2L1019.6 424.0L1019.9 423.8L1020.1 423.7L1020.3 422.7L1020.6 423.7L1020.8 424.1L1021.1 423.8L1021.3 422.7L1021.5 422.3L1021.8 418.4L1022.0 417.0L1022.3 417.0L1022.5 414.8L1022.7 415.1L1023.0 415.2L1023.2 413.3L1023.5 413.0L1023.7 412.6L1024.0 413.2L1024.2 414.0L1024.4 413.9L1024.7 412.1L1024.9 410.6L1025.2 409.3L1025.4 408.8L1025.6 407.6L1025.9 405.0L1026.1 401.6L1026.4 399.6L1026.6 397.2L1026.8 394.2L1027.1 392.5L1027.3 390.3L1027.6 389.5L1027.8 389.9L1028.0 389.0L1028.3 391.7L1028.5 390.7L1028.8 391.6L1029.0 391.2L1029.2 392.1L1029.5 388.3L1029.7 387.1L1030.0 387.9L1030.2 389.1L1030.4 392.7L1030.7 393.3L1030.9 395.1L1031.2 396.3L1031.4 397.7L1031.6 398.4L1031.9 398.3L1032.1 399.2L1032.4 397.7L1032.6 399.1L1032.8 397.5L1033.1 397.6L1033.3 400.2L1033.6 399.5L1033.8 399.2L1034.0 400.6L1034.3 400.4L1034.5 399.2L1034.8 399.6L1035.0 400.3L1035.2 401.2L1035.5 400.1L1035.7 402.3L1036.0 404.0L1036.2 403.4L1036.4 403.0L1036.7 401.7L1036.9 403.0L1037.2 401.3L1037.4 401.6L1037.7 400.2L1037.9 398.7L1038.1 399.1L1038.4 400.5L1038.6 399.8L1038.9 398.3L1039.1 398.9L1039.3 398.4L1039.6 398.6L1039.8 400.3L1040.1 401.5L1040.3 400.3L1040.5 403.1L1040.8 402.6L1041.0 403.3L1041.3 402.0L1041.5 401.6L1041.7 398.9L1042.0 401.2L1042.2 402.7L1042.5 400.8L1042.7 398.6L1042.9 396.3L1043.2 398.0L1043.4 397.4L1043.7 397.3L1043.9 396.9L1044.1 396.9L1044.4 395.6L1044.6 396.0L1044.9 394.3L1045.1 394.6L1045.3 395.2L1045.6 396.1L1045.8 396.0L1046.1 394.9L1046.3 395.2L1046.5 394.5L1046.8 396.7L1047.0 397.7L1047.3 397.4L1047.5 396.7L1047.7 395.6L1048.0 394.3L1048.2 393.8L1048.5 394.1L1048.7 394.6L1048.9 395.2L1049.2 397.5L1049.4 395.9L1049.7 395.3L1049.9 398.5L1050.1 395.2L1050.4 393.9L1050.6 393.7L1050.9 393.3L1051.1 393.2L1051.4 392.2L1051.6 392.0L1051.8 391.4L1052.1 391.8L1052.3 388.6L1052.6 386.9L1052.8 386.5L1053.0 384.7L1053.3 383.0L1053.5 384.1L1053.8 383.3L1054.0 384.3L1054.2 385.3L1054.5 385.8L1054.7 386.4L1055.0 386.2L1055.2 384.1L1055.4 384.1L1055.7 384.8L1055.9 384.0L1056.2 383.8L1056.4 384.8L1056.6 383.4L1056.9 384.2L1057.1 386.5L1057.4 385.5L1057.6 385.4L1057.8 385.0L1058.1 386.8L1058.3 387.0L1058.6 387.8L1058.8 386.4L1059.0 386.0L1059.3 385.8L1059.5 383.1L1059.8 385.0L1060.0 385.9L1060.2 383.2L1060.5 384.0L1060.7 383.5L1061.0 383.8L1061.2 384.0L1061.4 381.7L1061.7 381.3L1061.9 383.2L1062.2 382.4L1062.4 381.5L1062.6 380.2L1062.9 379.3L1063.1 380.4L1063.4 383.5L1063.6 384.7L1063.8 385.6L1064.1 389.1L1064.3 388.8L1064.6 388.3L1064.8 389.5L1065.1 390.5L1065.3 389.4L1065.5 388.2L1065.8 389.0L1066.0 389.5L1066.3 387.9L1066.5 387.8L1066.7 387.2L1067.0 388.2L1067.2 388.4L1067.5 388.7L1067.7 388.7L1067.9 390.6L1068.2 393.0L1068.4 392.9L1068.7 394.6L1068.9 393.8L1069.1 394.0L1069.4 395.1L1069.6 397.2L1069.9 396.6L1070.1 396.4L1070.3 396.6L1070.6 394.6L1070.8 394.7L1071.1 393.9L1071.3 394.5L1071.5 393.1L1071.8 390.7L1072.0 391.1L1072.3 391.8L1072.5 391.3L1072.7 392.7L1073.0 392.5L1073.2 392.0L1073.5 392.9L1073.7 390.9L1073.9 390.4L1074.2 390.7L1074.4 392.2L1074.7 392.2L1074.9 392.9L1075.1 392.0L1075.4 392.3L1075.6 394.2L1075.9 392.7L1076.1 395.3L1076.3 393.7L1076.6 393.1L1076.8 392.7L1077.1 393.6L1077.3 391.4L1077.5 388.0L1077.8 388.4L1078.0 388.9L1078.3 389.2L1078.5 392.2L1078.8 391.7L1079.0 391.4L1079.2 392.0L1079.5 391.8L1079.7 393.5L1080.0 391.1L1080.2 390.0L1080.4 384.7L1080.7 385.5L1080.9 384.6L1081.2 385.3L1081.4 387.6L1081.6 387.0L1081.9 386.1L1082.1 385.0L1082.4 383.9L1082.6 383.0L1082.8 384.0L1083.1 384.2L1083.3 384.4L1083.6 384.2L1083.8 385.4L1084.0 385.9L1084.3 385.5L1084.5 386.2L1084.8 385.9L1085.0 384.3L1085.2 386.3L1085.5 386.8L1085.7 385.4L1086.0 386.7L1086.2 387.0L1086.4 384.7L1086.7 386.9L1086.9 387.1L1087.2 388.0L1087.4 387.8L1087.6 387.3L1087.9 384.9L1088.1 385.9L1088.4 385.6L1088.6 384.9L1088.8 385.0L1089.1 384.7L1089.3 385.1L1089.6 384.2L1089.8 383.8L1090.0 380.6L1090.3 380.4L1090.5 381.7L1090.8 383.8L1091.0 383.5L1091.2 383.6L1091.5 386.0L1091.7 385.7L1092.0 386.9L1092.2 389.3L1092.5 389.4L1092.7 391.2L1092.9 390.3L1093.2 390.7L1093.4 390.8L1093.7 391.0L1093.9 392.7L1094.1 396.1L1094.4 395.2L1094.6 393.8L1094.9 394.0L1095.1 392.1L1095.3 392.3L1095.6 392.6L1095.8 391.8L1096.1 392.0L1096.3 389.5L1096.5 390.2L1096.8 387.7L1097.0 386.3L1097.3 385.3L1097.5 384.6L1097.7 385.6L1098.0 385.5L1098.2 384.7L1098.5 385.3L1098.7 387.2L1098.9 386.8L1099.2 387.0L1099.4 388.3L1099.7 388.4L1099.9 386.2L1100.1 389.4L1100.4 391.9L1100.6 388.7L1100.9 388.2L1101.1 388.3L1101.3 389.2L1101.6 389.7L1101.8 388.9L1102.1 387.1L1102.3 387.1L1102.5 388.3L1102.8 386.6L1103.0 385.0L1103.3 384.9L1103.5 382.1L1103.7 382.0L1104.0 381.6L1104.2 382.4L1104.5 381.6L1104.7 380.6L1104.9 380.4L1105.2 380.7L1105.4 380.1L1105.7 380.5L1105.9 381.9L1106.2 383.7L1106.4 386.2L1106.6 385.1L1106.9 384.6L1107.1 381.2L1107.4 383.8L1107.6 382.6L1107.8 382.5L1108.1 383.1L1108.3 381.0L1108.6 381.5L1108.8 381.3L1109.0 378.7L1109.3 378.9L1109.5 380.4L1109.8 377.7L1110.0 378.9L1110.2 379.2L1110.5 379.9L1110.7 380.3L1111.0 381.8L1111.2 381.3L1111.4 382.2L1111.7 381.3L1111.9 382.0L1112.2 380.6L1112.4 380.1L1112.6 382.1L1112.9 382.2L1113.1 381.6L1113.4 379.7L1113.6 378.3L1113.8 378.3L1114.1 379.4L1114.3 379.7L1114.6 380.2L1114.8 379.9L1115.0 381.6L1115.3 380.8L1115.5 379.8L1115.8 380.8L1116.0 380.5L1116.2 379.9L1116.5 378.9L1116.7 378.5L1117.0 379.1L1117.2 379.2L1117.4 377.2L1117.7 377.6L1117.9 377.6L1118.2 375.9L1118.4 376.8L1118.6 376.4L1118.9 375.8L1119.1 376.8L1119.4 378.5L1119.6 377.3L1119.9 377.7L1120.1 376.9L1120.3 380.4L1120.6 380.0L1120.8 381.9L1121.1 381.2L1121.3 382.6L1121.5 385.8L1121.8 382.3L1122.0 382.0L1122.3 383.1L1122.5 383.3L1122.7 382.7L1123.0 386.0L1123.2 386.4L1123.5 384.4L1123.7 385.9L1123.9 384.0L1124.2 386.1L1124.4 385.8L1124.7 386.5L1124.9 388.7L1125.1 389.4L1125.4 387.8L1125.6 385.2L1125.9 386.5L1126.1 387.1L1126.3 385.6L1126.6 386.5L1126.8 386.8L1127.1 387.3L1127.3 383.7L1127.5 382.9L1127.8 383.8L1128.0 384.4L1128.3 385.2L1128.5 381.5L1128.7 381.5L1129.0 381.9L1129.2 384.9L1129.5 383.1L1129.7 382.3L1129.9 382.2L1130.2 383.5L1130.4 382.9L1130.7 384.5L1130.9 383.3L1131.1 383.6L1131.4 383.0L1131.6 383.2L1131.9 382.4L1132.1 380.2L1132.3 381.9L1132.6 382.4L1132.8 381.8L1133.1 382.3L1133.3 383.9L1133.5 382.8L1133.8 383.0L1134.0 384.1L1134.3 385.2L1134.5 385.1L1134.8 382.6L1135.0 384.8L1135.2 385.6L1135.5 385.8L1135.7 385.6L1136.0 386.2L1136.2 385.9L1136.4 384.7L1136.7 384.1L1136.9 383.8L1137.2 383.4L1137.4 382.4L1137.6 383.8L1137.9 382.6L1138.1 384.0L1138.4 382.9L1138.6 383.8L1138.8 386.1L1139.1 386.7L1139.3 385.9L1139.6 386.3L1139.8 386.9L1140.0 384.9L1140.3 384.4L1140.5 385.1L1140.8 384.9L1141.0 385.3L1141.2 386.7L1141.5 388.0L1141.7 389.3L1142.0 390.1L1142.2 389.2L1142.4 388.9L1142.7 388.2L1142.9 387.2L1143.2 386.6L1143.4 384.0L1143.6 383.2L1143.9 382.8L1144.1 381.1L1144.4 380.8L1144.6 381.3L1144.8 380.7L1145.1 383.3L1145.3 379.4L1145.6 378.9L1145.8 376.3L1146.0 377.5L1146.3 381.0L1146.5 377.3L1146.8 377.4L1147.0 377.9L1147.2 377.2L1147.5 377.6L1147.7 374.2L1148.0 375.2L1148.2 375.4L1148.5 375.0L1148.7 374.1L1148.9 375.0L1149.2 374.3L1149.4 374.6L1149.7 373.8L1149.9 370.8L1150.1 370.8L1150.4 371.1L1150.6 372.2L1150.9 371.0L1151.1 371.1L1151.3 372.0L1151.6 372.3L1151.8 374.0L1152.1 376.5L1152.3 375.0L1152.5 372.3L1152.8 373.4L1153.0 375.4L1153.3 376.4L1153.5 377.1L1153.7 375.8L1154.0 374.5L1154.2 375.4L1154.5 373.9L1154.7 371.1L1154.9 369.7L1155.2 373.0L1155.4 375.5L1155.7 374.5L1155.9 373.6L1156.1 374.0L1156.4 373.1L1156.6 375.1L1156.9 375.1L1157.1 373.9L1157.3 375.8L1157.6 374.9L1157.8 375.2L1158.1 375.2L1158.3 374.7L1158.5 375.0L1158.8 374.0L1159.0 371.5L1159.3 368.7L1159.5 367.2L1159.7 366.4L1160.0 366.6L1160.2 366.9L1160.5 367.8L1160.7 368.0L1160.9 367.0L1161.2 366.1L1161.4 363.5L1161.7 363.6L1161.9 364.4L1162.2 365.3L1162.4 365.1L1162.6 364.8L1162.9 365.8L1163.1 365.4L1163.4 365.9L1163.6 366.2L1163.8 366.6L1164.1 368.5L1164.3 367.6L1164.6 367.1L1164.8 366.1L1165.0 365.0L1165.3 367.2L1165.5 369.6L1165.8 369.5L1166.0 370.3L1166.2 371.8L1166.5 372.6L1166.7 374.0L1167.0 372.0L1167.2 371.0L1167.4 371.5L1167.7 373.3L1167.9 373.2L1168.2 371.7L1168.4 371.0L1168.6 369.8L1168.9 368.5L1169.1 370.5L1169.4 369.4L1169.6 369.5L1169.8 372.4L1170.1 374.0L1170.3 374.4L1170.6 373.5L1170.8 373.9L1171.0 375.9L1171.3 376.5L1171.5 378.0L1171.8 377.8L1172.0 378.1L1172.2 377.4L1172.5 377.6L1172.7 379.1L1173.0 376.8L1173.2 376.5L1173.4 376.7L1173.7 375.9L1173.9 375.5L1174.2 376.6L1174.4 379.4L1174.6 380.1L1174.9 380.5L1175.1 378.4L1175.4 380.9L1175.6 380.9L1175.9 380.7L1176.1 379.1L1176.3 379.0L1176.6 377.6L1176.8 377.8L1177.1 378.4L1177.3 378.4L1177.5 378.7L1177.8 377.4L1178.0 379.4L1178.3 378.6L1178.5 376.1L1178.7 376.0L1179.0 375.2L1179.2 374.2L1179.5 374.1L1179.7 374.8L1179.9 373.6L1180.2 373.7L1180.4 375.8L1180.7 376.9L1180.9 376.9L1181.1 377.3L1181.4 377.4L1181.6 377.8L1181.9 379.0L1182.1 378.9L1182.3 375.7L1182.6 375.9L1182.8 374.9L1183.1 376.0L1183.3 375.3L1183.5 375.7L1183.8 378.6L1184.0 377.0L1184.3 375.4L1184.5 373.4L1184.7 370.2L1185.0 367.7L1185.2 368.4L1185.5 367.6L1185.7 365.2L1185.9 363.3L1186.2 364.4L1186.4 363.8L1186.7 363.9L1186.9 365.0L1187.1 367.4L1187.4 370.6L1187.6 372.3L1187.9 372.8L1188.1 373.1L1188.3 375.5L1188.6 377.2L1188.8 376.5L1189.1 376.7L1189.3 376.6L1189.6 376.1L1189.8 374.9L1190.0 372.6L1190.3 371.5L1190.5 369.1L1190.8 370.5L1191.0 371.1L1191.2 369.5L1191.5 371.5L1191.7 372.7L1192.0 370.3L1192.2 373.1L1192.4 374.3L1192.7 377.2L1192.9 375.5L1193.2 376.3L1193.4 376.9L1193.6 377.1L1193.9 377.2L1194.1 378.4L1194.4 376.1L1194.6 374.3L1194.8 372.3L1195.1 371.6L1195.3 370.8L1195.6 371.3L1195.8 371.8L1196.0 371.9L1196.3 371.2L1196.5 370.8L1196.8 372.3L1197.0 373.6L1197.2 373.8L1197.5 373.6L1197.7 375.9L1198.0 375.1L1198.2 376.0L1198.4 377.5L1198.7 376.9L1198.9 377.8L1199.2 376.1L1199.4 377.3L1199.6 377.1L1199.9 374.4L1200.1 374.8L1200.4 373.2L1200.6 374.7L1200.8 373.4L1201.1 372.7L1201.3 372.8L1201.6 372.0L1201.8 372.0L1202.0 370.8L1202.3 371.3L1202.5 370.9L1202.8 370.7L1203.0 366.7L1203.3 368.0L1203.5 367.6L1203.7 364.8L1204.0 364.6L1204.2 365.2L1204.5 366.5L1204.7 364.9L1204.9 367.0L1205.2 366.7L1205.4 369.8L1205.7 369.3L1205.9 370.0L1206.1 369.2L1206.4 367.4L1206.6 368.6L1206.9 369.5L1207.1 371.1L1207.3 371.7L1207.6 370.4L1207.8 367.6L1208.1 366.4L1208.3 365.1L1208.5 363.8L1208.8 364.5L1209.0 364.9L1209.3 364.5L1209.5 364.8L1209.7 364.6L1210.0 364.7L1210.2 365.6L1210.5 366.8L1210.7 365.8L1210.9 363.8L1211.2 365.7L1211.4 365.7L1211.7 367.1L1211.9 364.6L1212.1 363.9L1212.4 363.8L1212.6 361.7L1212.9 360.9L1213.1 361.8L1213.3 363.2L1213.6 365.3L1213.8 364.0L1214.1 362.0L1214.3 362.7L1214.5 363.8L1214.8 364.0L1215.0 362.1L1215.3 363.2L1215.5 364.1L1215.7 364.6L1216.0 363.6L1216.2 363.6L1216.5 364.2L1216.7 362.9L1217.0 360.0L1217.2 360.1L1217.4 360.3L1217.7 359.9L1217.9 360.8L1218.2 359.6L1218.4 359.1L1218.6 358.2L1218.9 358.6L1219.1 360.4L1219.4 359.6L1219.6 362.0L1219.8 363.6L1220.1 364.1L1220.3 364.3L1220.6 366.1L1220.8 365.2L1221.0 364.4L1221.3 362.3L1221.5 362.5L1221.8 363.9L1222.0 364.2L1222.2 364.3L1222.5 363.6L1222.7 363.6L1223.0 361.4L1223.2 362.8L1223.4 362.2L1223.7 360.9L1223.9 360.1L1224.2 359.4L1224.4 361.0L1224.6 362.8L1224.9 361.2L1225.1 362.9L1225.4 364.6L1225.6 364.1L1225.8 362.4L1226.1 361.8L1226.3 361.3L1226.6 362.2L1226.8 362.2L1227.0 360.0L1227.3 360.9L1227.5 359.3L1227.8 361.1L1228.0 360.0L1228.2 359.7L1228.5 359.3L1228.7 359.4L1229.0 361.9L1229.2 363.7L1229.4 365.0L1229.7 366.0L1229.9 364.3L1230.2 364.1L1230.4 363.9L1230.7 362.9L1230.9 363.9L1231.1 363.1L1231.4 362.4L1231.6 361.2L1231.9 358.7L1232.1 359.8L1232.3 361.9L1232.6 362.5L1232.8 361.5L1233.1 358.3L1233.3 359.2L1233.5 361.4L1233.8 362.3L1234.0 363.9L1234.3 366.0L1234.5 367.7L1234.7 367.0L1235.0 368.3L1235.2 369.0L1235.5 366.5L1235.7 365.7L1235.9 363.6L1236.2 363.3L1236.4 363.9L1236.7 362.1L1236.9 359.1L1237.1 360.9L1237.4 361.3L1237.6 363.2L1237.9 361.3L1238.1 362.7L1238.3 365.4L1238.6 367.8L1238.8 367.2L1239.1 367.1L1239.3 366.5L1239.5 367.5L1239.8 368.5L1240.0 368.1L1240.3 365.6L1240.5 366.2L1240.7 365.2L1241.0 365.7L1241.2 365.8L1241.5 367.5L1241.7 368.6L1241.9 367.6L1242.2 367.7L1242.4 369.8L1242.7 368.8L1242.9 369.1L1243.1 370.6L1243.4 372.0L1243.6 372.5L1243.9 370.4L1244.1 368.5L1244.4 368.7L1244.6 369.2L1244.8 372.6L1245.1 371.3L1245.3 372.9L1245.6 373.7L1245.8 371.3L1246.0 370.2L1246.3 370.5L1246.5 369.9L1246.8 369.8L1247.0 370.7L1247.2 369.8L1247.5 370.7L1247.7 370.0L1248.0 369.4L1248.2 370.4L1248.4 369.8L1248.7 370.4L1248.9 372.7L1249.2 372.9L1249.4 372.2L1249.6 372.5L1249.9 371.4L1250.1 372.3L1250.4 369.7L1250.6 369.9L1250.8 368.5L1251.1 366.8L1251.3 368.6L1251.6 366.7L1251.8 368.5L1252.0 368.5L1252.3 369.6L1252.5 367.4L1252.8 368.2L1253.0 369.3L1253.2 368.2L1253.5 367.0L1253.7 369.5L1254.0 368.7L1254.2 367.3L1254.4 365.6L1254.7 365.5L1254.9 365.3L1255.2 364.8L1255.4 366.5L1255.6 365.4L1255.9 365.5L1256.1 366.9L1256.4 365.0L1256.6 366.0L1256.8 368.0L1257.1 365.9L1257.3 364.5L1257.6 363.2L1257.8 360.9L1258.1 361.8L1258.3 359.6L1258.5 360.7L1258.8 363.1L1259.0 361.4L1259.3 361.5L1259.5 359.4L1259.7 361.1L1260.0 360.7L1260.2 361.0L1260.5 361.9L1260.7 363.4L1260.9 363.6L1261.2 364.2L1261.4 363.9L1261.7 364.6L1261.9 363.4L1262.1 364.0L1262.4 362.0L1262.6 361.9L1262.9 365.0L1263.1 365.6L1263.3 364.4L1263.6 365.2L1263.8 364.4L1264.1 362.6L1264.3 362.2L1264.5 363.9L1264.8 364.9L1265.0 365.4L1265.3 364.7L1265.5 363.7L1265.7 366.1L1266.0 366.7L1266.2 365.8L1266.5 363.4L1266.7 362.1L1266.9 366.0L1267.2 364.8L1267.4 365.1L1267.7 365.7L1267.9 365.7L1268.1 365.6L1268.4 364.1L1268.6 363.1L1268.9 365.8L1269.1 365.2L1269.3 366.8L1269.6 365.0L1269.8 365.2L1270.1 366.1L1270.3 367.8L1270.5 366.7L1270.8 367.9L1271.0 368.7L1271.3 368.1L1271.5 369.1L1271.8 368.1L1272.0 367.2L1272.2 367.4L1272.5 364.0L1272.7 364.3L1273.0 363.3L1273.2 361.7L1273.4 361.5L1273.7 362.9L1273.9 362.8L1274.2 365.0L1274.4 363.7L1274.6 362.4L1274.9 365.0L1275.1 365.9L1275.4 367.5L1275.6 366.7L1275.8 368.1L1276.1 368.6L1276.3 369.6L1276.6 369.8L1276.8 371.4L1277.0 370.5L1277.3 369.2L1277.5 367.2L1277.8 369.0L1278.0 368.1L1278.2 366.9L1278.5 365.9L1278.7 365.7L1279.0 364.4L1279.2 364.6L1279.4 364.3L1279.7 364.2L1279.9 363.5L1280.2 364.2L1280.4 364.2L1280.6 365.0L1280.9 366.0L1281.1 367.0L1281.4 364.5L1281.6 364.3L1281.8 363.7L1282.1 365.2L1282.3 363.5L1282.6 362.9L1282.8 363.0L1283.0 362.9L1283.3 364.5L1283.5 364.2L1283.8 366.0L1284.0 364.3L1284.2 362.2L1284.5 364.4L1284.7 365.4L1285.0 366.3L1285.2 366.7L1285.5 367.5L1285.7 366.1L1285.9 367.4L1286.2 366.7L1286.4 368.0L1286.7 367.9L1286.9 364.9L1287.1 363.0L1287.4 364.5L1287.6 364.1L1287.9 363.4L1288.1 363.6L1288.3 362.9L1288.6 362.2L1288.8 362.3L1289.1 362.4L1289.3 364.4L1289.5 364.4L1289.8 366.8L1290.0 369.1L1290.3 370.8L1290.5 371.3L1290.7 370.6L1291.0 369.9L1291.2 368.8L1291.5 366.9L1291.7 365.9L1291.9 364.1L1292.2 365.4L1292.4 365.1L1292.7 363.5L1292.9 360.0L1293.1 359.3L1293.4 358.0L1293.6 356.0L1293.9 353.9L1294.1 350.5L1294.3 351.0L1294.6 350.7L1294.8 353.9L1295.1 353.4L1295.3 352.7L1295.5 354.1L1295.8 354.2L1296.0 354.4L1296.3 353.8L1296.5 352.9L1296.7 354.9L1297.0 356.2L1297.2 358.2L1297.5 357.3L1297.7 356.8L1297.9 355.2L1298.2 356.2L1298.4 354.0L1298.7 354.4L1298.9 355.6L1299.2 357.3L1299.4 355.8L1299.6 357.0L1299.9 355.7L1300.1 354.3L1300.4 352.4L1300.6 354.0L1300.8 356.3L1301.1 355.4L1301.3 354.4L1301.6 353.9L1301.8 357.4L1302.0 358.7L1302.3 357.9L1302.5 355.5L1302.8 354.8L1303.0 356.5L1303.2 359.2L1303.5 358.9L1303.7 357.9L1304.0 357.2L1304.2 354.7L1304.4 356.1L1304.7 354.7L1304.9 356.3L1305.2 354.1L1305.4 352.8L1305.6 353.6L1305.9 353.0L1306.1 354.5L1306.4 354.9L1306.6 353.8L1306.8 355.2L1307.1 357.0L1307.3 354.9L1307.6 357.8L1307.8 358.4L1308.0 359.1L1308.3 357.2L1308.5 356.8L1308.8 356.6L1309.0 357.2L1309.2 356.6L1309.5 356.3L1309.7 356.1L1310.0 356.4" stroke="#ff7043" stroke-width="3.9" fill="none" stroke-linejoin="round"/></g><circle cx="1309.9" cy="356.4" r="7.4" fill="#ff7043"/></svg>
<div class="t" style="left:764.69px;top:320.00px;font-size:25.4px;color:#2b2a38;transform:scaleX(0.9651);-webkit-text-stroke:0.5px #fff;">0.960</div>
<div class="t" style="left:764.69px;top:364.00px;font-size:25.4px;color:#2b2a38;transform:scaleX(0.9651);-webkit-text-stroke:0.5px #fff;">0.920</div>
<div class="t" style="left:764.69px;top:407.00px;font-size:25.4px;color:#2b2a38;transform:scaleX(0.9651);-webkit-text-stroke:0.5px #fff;">0.880</div>
<div class="t" style="left:764.69px;top:450.00px;font-size:25.4px;color:#2b2a38;transform:scaleX(0.9651);-webkit-text-stroke:0.5px #fff;">0.840</div>
<div class="t" style="left:764.69px;top:493.00px;font-size:25.4px;color:#2b2a38;transform:scaleX(0.9651);-webkit-text-stroke:0.5px #fff;">0.800</div>
<div class="t" style="left:764.69px;top:536.00px;font-size:25.4px;color:#2b2a38;transform:scaleX(0.9651);-webkit-text-stroke:0.5px #fff;">0.760</div>
<div class="t" style="left:764.69px;top:579.00px;font-size:25.4px;color:#2b2a38;transform:scaleX(0.9651);-webkit-text-stroke:0.5px #fff;">0.720</div>
<div class="t" style="left:863.01px;top:632.00px;font-size:25.4px;color:#2b2a38;transform:scaleX(0.9651);-webkit-text-stroke:0.5px #fff;">0.000</div>
<div class="t" style="left:959.52px;top:632.00px;font-size:25.4px;color:#2b2a38;transform:scaleX(0.9592);-webkit-text-stroke:0.5px #fff;">400.0</div>
<div class="t" style="left:1055.17px;top:632.00px;font-size:25.4px;color:#2b2a38;transform:scaleX(0.9671);-webkit-text-stroke:0.5px #fff;">800.0</div>
<div class="t" style="left:1144.93px;top:632.00px;font-size:25.4px;color:#2b2a38;transform:scaleX(0.9492);-webkit-text-stroke:0.5px #fff;">1.200k</div>
<div class="t" style="left:1241.07px;top:632.00px;font-size:25.4px;color:#2b2a38;transform:scaleX(0.9492);-webkit-text-stroke:0.5px #fff;">1.600k</div>
<svg class="b" style="left:800px;top:915.7px" width="700" height="400" viewBox="800 915.7 700 400"><defs><clipPath id="cl"><rect x="845.0" y="935.7" width="480.70000000000005" height="301.89999999999986"/></clipPath></defs><path d="M835.1 936H1326.6M835.1 961H1326.6M835.1 986H1326.6M835.1 1011H1326.6M835.1 1036H1326.6M835.1 1061H1326.6M835.1 1087H1326.6M835.1 1112H1326.6M835.1 1137H1326.6M835.1 1162H1326.6M835.1 1187H1326.6M835.1 1212H1326.6M844.1 1238H1326.6" stroke="#3c3c3c" stroke-opacity="0.255" stroke-width="2" fill="none"/><path d="M893 934.8V1248.2M941 934.8V1248.2M989 934.8V1248.2M1037 934.8V1248.2M1085 934.8V1248.2M1133 934.8V1248.2M1181 934.8V1248.2M1230 934.8V1248.2M1278 934.8V1248.2M1326 934.8V1248.2" stroke="#3c3c3c" stroke-opacity="0.235" stroke-width="2" fill="none"/><path d="M845 935.2V1238.5" stroke="#3c3c3c" stroke-opacity="0.48" stroke-width="2" fill="none"/><path d="M845 1238.5V1248.2" stroke="#3c3c3c" stroke-opacity="0.235" stroke-width="2" fill="none"/><path d="M893.4 936.5V1236.7M846.0 1212.4H1325.7" stroke="#8c8c8c" stroke-width="2.9" fill="none"/><g clip-path="url(#cl)"><path d="M893.2 -4386.1L893.4 -3793.0L893.7 -3255.1L893.9 -2265.5L894.2 -2256.6L894.4 -1427.1L894.6 -1183.2L894.9 -699.9L895.1 -561.7L895.4 73.6L895.6 425.5L895.8 751.9L896.1 960.6L896.3 1007.7L896.6 1116.3L896.8 1071.8L897.0 1069.5L897.3 1099.8L897.5 1093.8L897.8 1033.0L898.0 1045.7L898.2 1070.2L898.5 1082.5L898.7 1122.3L899.0 1092.0L899.2 1031.2L899.4 1064.2L899.7 1132.5L899.9 1146.6L900.2 1120.4L900.4 1101.0L900.7 1121.8L900.9 1118.7L901.1 1105.2L901.4 1092.6L901.6 1114.2L901.9 1088.4L902.1 1150.6L902.3 1115.9L902.6 1119.5L902.8 1173.8L903.1 1061.5L903.3 1176.4L903.5 1173.9L903.8 912.9L904.0 1063.1L904.3 1118.8L904.5 1061.0L904.7 1076.8L905.0 1169.4L905.2 1116.8L905.5 1062.2L905.7 1144.2L905.9 1136.4L906.2 1154.8L906.4 1108.3L906.7 1158.2L906.9 1159.6L907.1 1174.3L907.4 1168.6L907.6 1135.1L907.9 1125.3L908.1 1156.3L908.3 1172.5L908.6 1132.9L908.8 1132.8L909.1 1087.3L909.3 1161.4L909.5 1159.6L909.8 1129.1L910.0 1074.9L910.3 1150.6L910.5 1152.0L910.7 1173.5L911.0 1161.2L911.2 1113.6L911.5 1119.0L911.7 1106.5L911.9 1186.0L912.2 1121.1L912.4 1174.9L912.7 1132.3L912.9 1194.4L913.1 1156.3L913.4 1174.8L913.6 1101.5L913.9 1150.5L914.1 1100.8L914.4 1166.1L914.6 1057.6L914.8 1166.6L915.1 1064.1L915.3 1168.0L915.6 1177.9L915.8 1123.9L916.0 1166.5L916.3 1158.1L916.5 1184.2L916.8 1165.8L917.0 1154.0L917.2 1173.9L917.5 1145.8L917.7 1195.3L918.0 1127.3L918.2 1168.4L918.4 1099.4L918.7 1167.5L918.9 1174.1L919.2 1170.0L919.4 1151.5L919.6 1141.2L919.9 1170.8L920.1 1177.4L920.4 1147.6L920.6 1133.7L920.8 1191.0L921.1 1182.1L921.3 1175.9L921.6 1091.5L921.8 1117.8L922.0 1136.7L922.3 1147.7L922.5 1183.9L922.8 1124.2L923.0 1172.8L923.2 1179.5L923.5 1082.7L923.7 1189.2L924.0 1115.9L924.2 1159.8L924.4 1182.8L924.7 1161.2L924.9 1182.1L925.2 1161.9L925.4 1179.5L925.6 1187.6L925.9 1040.4L926.1 1177.9L926.4 1139.7L926.6 1169.7L926.8 1151.3L927.1 1189.7L927.3 1187.2L927.6 1204.3L927.8 1142.7L928.1 1160.3L928.3 1189.7L928.5 1150.0L928.8 1157.7L929.0 1035.5L929.3 1167.5L929.5 1149.5L929.7 1158.5L930.0 1154.1L930.2 1173.5L930.5 1180.5L930.7 1156.1L930.9 1139.1L931.2 1190.7L931.4 1190.4L931.7 1174.1L931.9 1115.3L932.1 1177.3L932.4 1195.9L932.6 1153.9L932.9 1155.5L933.1 1108.6L933.3 1169.8L933.6 1107.5L933.8 1185.6L934.1 1151.4L934.3 1171.1L934.5 1191.4L934.8 1179.0L935.0 1137.1L935.3 1144.9L935.5 1180.8L935.7 1145.3L936.0 1152.1L936.2 1152.3L936.5 1168.4L936.7 1168.0L936.9 1187.4L937.2 1175.7L937.4 1172.1L937.7 1186.3L937.9 1179.7L938.1 1171.4L938.4 1170.4L938.6 1148.2L938.9 1190.1L939.1 1181.7L939.3 1169.4L939.6 1181.5L939.8 1168.2L940.1 1182.9L940.3 1144.6L940.5 1179.2L940.8 1191.5L941.0 1158.4L941.3 1127.1L941.5 1198.6L941.8 1178.3L942.0 1174.8L942.2 1151.5L942.5 1135.7L942.7 1179.3L943.0 1196.2L943.2 1162.6L943.4 1153.6L943.7 1167.9L943.9 1175.9L944.2 1189.3L944.4 1093.3L944.6 1193.6L944.9 1196.3L945.1 1156.2L945.4 1173.0L945.6 1164.7L945.8 1171.9L946.1 1133.4L946.3 1143.5L946.6 1187.1L946.8 1157.3L947.0 1194.2L947.3 1198.5L947.5 1152.2L947.8 1186.1L948.0 1201.4L948.2 1180.4L948.5 1189.4L948.7 1171.0L949.0 1181.4L949.2 1190.9L949.4 1190.3L949.7 1166.0L949.9 1192.8L950.2 1179.1L950.4 1193.5L950.6 1173.5L950.9 1136.5L951.1 1171.5L951.4 1158.7L951.6 1174.2L951.8 1193.8L952.1 1186.5L952.3 1181.3L952.6 1175.1L952.8 1190.5L953.0 1172.0L953.3 1191.9L953.5 1182.1L953.8 1183.3L954.0 1196.1L954.2 1164.3L954.5 1182.8L954.7 1182.1L955.0 1184.3L955.2 1202.6L955.5 1198.4L955.7 1194.4L955.9 1166.0L956.2 1191.5L956.4 1174.4L956.7 1195.8L956.9 1194.2L957.1 1190.4L957.4 1164.9L957.6 1200.4L957.9 1187.0L958.1 1178.4L958.3 1182.7L958.6 1185.0L958.8 1171.5L959.1 1180.5L959.3 1195.8L959.5 1174.5L959.8 1193.9L960.0 1189.3L960.3 1155.3L960.5 1118.3L960.7 1155.4L961.0 1178.5L961.2 1193.9L961.5 1193.8L961.7 1149.3L961.9 1180.2L962.2 1198.9L962.4 1152.4L962.7 1176.0L962.9 1159.7L963.1 1179.2L963.4 1203.3L963.6 1193.8L963.9 1187.3L964.1 1187.6L964.3 1154.7L964.6 1193.2L964.8 1186.8L965.1 1186.3L965.3 1186.8L965.5 1196.5L965.8 1198.0L966.0 1205.1L966.3 1180.9L966.5 1188.3L966.7 1182.9L967.0 1196.8L967.2 1185.8L967.5 1196.2L967.7 1196.5L967.9 1181.0L968.2 1176.0L968.4 1177.0L968.7 1186.6L968.9 1190.7L969.2 1159.2L969.4 1163.2L969.6 1193.3L969.9 1197.2L970.1 1180.8L970.4 1181.7L970.6 1195.9L970.8 1130.0L971.1 1203.3L971.3 1195.3L971.6 1183.0L971.8 1169.6L972.0 1202.2L972.3 1191.6L972.5 1159.0L972.8 1159.8L973.0 1189.6L973.2 1186.1L973.5 1195.9L973.7 1181.0L974.0 1197.2L974.2 1203.2L974.4 1200.5L974.7 1186.0L974.9 1199.2L975.2 1167.7L975.4 1163.6L975.6 1170.2L975.9 1177.0L976.1 1167.3L976.4 1183.3L976.6 1173.0L976.8 1180.3L977.1 1174.8L977.3 1197.2L977.6 1194.3L977.8 1197.1L978.0 1174.1L978.3 1179.9L978.5 1195.5L978.8 1197.1L979.0 1193.6L979.2 1173.4L979.5 1188.7L979.7 1190.2L980.0 1194.7L980.2 1188.9L980.4 1156.6L980.7 1194.8L980.9 1191.6L981.2 1153.9L981.4 1176.7L981.6 1198.4L981.9 1169.5L982.1 1199.3L982.4 1179.6L982.6 1205.5L982.9 1197.4L983.1 1173.3L983.3 1194.1L983.6 1195.3L983.8 1187.2L984.1 1187.8L984.3 1193.0L984.5 1195.0L984.8 1151.9L985.0 1160.6L985.3 1183.7L985.5 1198.8L985.7 1193.9L986.0 1191.6L986.2 1181.7L986.5 1158.7L986.7 1194.0L986.9 1186.7L987.2 1193.3L987.4 1187.0L987.7 1195.7L987.9 1183.9L988.1 1170.3L988.4 1193.2L988.6 1192.6L988.9 1187.7L989.1 1200.4L989.3 1154.8L989.6 1200.7L989.8 1193.2L990.1 1197.7L990.3 1163.8L990.5 1194.6L990.8 1194.8L991.0 1153.8L991.3 1191.1L991.5 1197.2L991.7 1190.0L992.0 1187.7L992.2 1197.1L992.5 1192.1L992.7 1192.4L992.9 1180.6L993.2 1180.0L993.4 1178.9L993.7 1191.8L993.9 1179.7L994.1 1192.8L994.4 1173.5L994.6 1185.9L994.9 1195.0L995.1 1172.4L995.3 1202.4L995.6 1199.3L995.8 1198.1L996.1 1192.5L996.3 1201.0L996.6 1200.9L996.8 1204.3L997.0 1190.1L997.3 1198.2L997.5 1149.4L997.8 1181.6L998.0 1200.7L998.2 1172.1L998.5 1190.6L998.7 1177.0L999.0 1200.7L999.2 1175.7L999.4 1176.9L999.7 1195.9L999.9 1199.2L1000.2 1195.7L1000.4 1189.4L1000.6 1144.9L1000.9 1162.6L1001.1 1169.9L1001.4 1194.6L1001.6 1195.6L1001.8 1188.6L1002.1 1195.2L1002.3 1196.8L1002.6 1194.7L1002.8 1182.5L1003.0 1193.5L1003.3 1190.5L1003.5 1195.4L1003.8 1194.9L1004.0 1196.1L1004.2 1176.1L1004.5 1190.9L1004.7 1171.9L1005.0 1194.9L1005.2 1180.0L1005.4 1203.0L1005.7 1197.0L1005.9 1194.1L1006.2 1198.8L1006.4 1194.7L1006.6 1200.7L1006.9 1195.3L1007.1 1199.1L1007.4 1193.9L1007.6 1196.5L1007.8 1201.3L1008.1 1197.5L1008.3 1193.9L1008.6 1202.8L1008.8 1193.3L1009.0 1178.4L1009.3 1196.3L1009.5 1188.7L1009.8 1187.9L1010.0 1200.4L1010.3 1177.7L1010.5 1149.5L1010.7 1201.8L1011.0 1160.4L1011.2 1200.1L1011.5 1175.8L1011.7 1205.4L1011.9 1181.5L1012.2 1193.7L1012.4 1203.3L1012.7 1201.0L1012.9 1202.2L1013.1 1201.4L1013.4 1191.6L1013.6 1196.8L1013.9 1207.6L1014.1 1197.9L1014.3 1191.0L1014.6 1194.7L1014.8 1173.0L1015.1 1205.7L1015.3 1193.5L1015.5 1195.4L1015.8 1188.5L1016.0 1203.9L1016.3 1203.8L1016.5 1197.2L1016.7 1195.3L1017.0 1205.8L1017.2 1192.7L1017.5 1196.1L1017.7 1188.9L1017.9 1208.0L1018.2 1191.6L1018.4 1202.1L1018.7 1199.8L1018.9 1188.7L1019.1 1175.0L1019.4 1195.2L1019.6 1197.4L1019.9 1181.8L1020.1 1202.3L1020.3 1197.8L1020.6 1200.2L1020.8 1202.8L1021.1 1195.1L1021.3 1168.7L1021.5 1194.7L1021.8 1192.3L1022.0 1197.0L1022.3 1184.9L1022.5 1195.3L1022.7 1202.4L1023.0 1196.0L1023.2 1180.3L1023.5 1197.5L1023.7 1184.0L1024.0 1197.4L1024.2 1169.4L1024.4 1194.5L1024.7 1190.9L1024.9 1199.0L1025.2 1188.9L1025.4 1198.6L1025.6 1205.1L1025.9 1194.5L1026.1 1204.0L1026.4 1180.0L1026.6 1189.5L1026.8 1196.9L1027.1 1190.7L1027.3 1208.2L1027.6 1179.3L1027.8 1201.4L1028.0 1191.0L1028.3 1157.0L1028.5 1205.6L1028.8 1200.0L1029.0 1194.3L1029.2 1193.6L1029.5 1205.9L1029.7 1202.9L1030.0 1180.3L1030.2 1201.2L1030.4 1192.4L1030.7 1204.8L1030.9 1202.8L1031.2 1206.4L1031.4 1195.1L1031.6 1185.4L1031.9 1196.6L1032.1 1199.3L1032.4 1195.4L1032.6 1193.4L1032.8 1199.4L1033.1 1192.6L1033.3 1172.4L1033.6 1166.6L1033.8 1201.2L1034.0 1204.5L1034.3 1173.3L1034.5 1188.0L1034.8 1184.9L1035.0 1192.2L1035.2 1199.1L1035.5 1188.1L1035.7 1186.3L1036.0 1185.6L1036.2 1203.8L1036.4 1187.5L1036.7 1200.0L1036.9 1200.1L1037.2 1194.8L1037.4 1200.0L1037.7 1165.1L1037.9 1194.8L1038.1 1190.0L1038.4 1196.1L1038.6 1193.9L1038.9 1205.6L1039.1 1202.1L1039.3 1192.5L1039.6 1195.1L1039.8 1196.7L1040.1 1207.7L1040.3 1201.8L1040.5 1186.8L1040.8 1187.3L1041.0 1199.2L1041.3 1201.9L1041.5 1196.9L1041.7 1179.0L1042.0 1196.0L1042.2 1195.5L1042.5 1193.6L1042.7 1192.0L1042.9 1197.4L1043.2 1202.0L1043.4 1203.3L1043.7 1198.7L1043.9 1196.0L1044.1 1202.7L1044.4 1190.8L1044.6 1204.9L1044.9 1180.2L1045.1 1204.1L1045.3 1200.0L1045.6 1196.3L1045.8 1166.8L1046.1 1193.0L1046.3 1188.8L1046.5 1191.6L1046.8 1183.7L1047.0 1184.8L1047.3 1173.3L1047.5 1200.6L1047.7 1203.2L1048.0 1188.4L1048.2 1181.7L1048.5 1199.4L1048.7 1185.5L1048.9 1189.3L1049.2 1193.2L1049.4 1191.5L1049.7 1199.4L1049.9 1196.7L1050.1 1202.5L1050.4 1198.8L1050.6 1171.3L1050.9 1207.9L1051.1 1203.1L1051.4 1201.5L1051.6 1177.2L1051.8 1196.8L1052.1 1193.1L1052.3 1170.5L1052.6 1200.5L1052.8 1201.3L1053.0 1206.7L1053.3 1196.1L1053.5 1203.1L1053.8 1187.6L1054.0 1197.5L1054.2 1206.5L1054.5 1205.6L1054.7 1185.4L1055.0 1194.1L1055.2 1194.1L1055.4 1202.4L1055.7 1197.8L1055.9 1209.2L1056.2 1199.2L1056.4 1201.0L1056.6 1195.5L1056.9 1207.4L1057.1 1203.1L1057.4 1203.8L1057.6 1194.4L1057.8 1198.4L1058.1 1204.2L1058.3 1205.8L1058.6 1201.0L1058.8 1193.2L1059.0 1204.0L1059.3 1208.0L1059.5 1193.5L1059.8 1201.8L1060.0 1181.8L1060.2 1201.6L1060.5 1205.0L1060.7 1200.3L1061.0 1204.8L1061.2 1200.8L1061.4 1196.9L1061.7 1190.8L1061.9 1197.7L1062.2 1198.6L1062.4 1190.0L1062.6 1201.5L1062.9 1198.9L1063.1 1192.0L1063.4 1205.0L1063.6 1195.8L1063.8 1205.3L1064.1 1206.2L1064.3 1209.0L1064.6 1203.4L1064.8 1199.4L1065.1 1201.2L1065.3 1200.7L1065.5 1188.3L1065.8 1198.8L1066.0 1205.2L1066.3 1201.7L1066.5 1198.6L1066.7 1198.3L1067.0 1200.8L1067.2 1201.5L1067.5 1204.0L1067.7 1205.4L1067.9 1203.0L1068.2 1202.4L1068.4 1204.8L1068.7 1198.6L1068.9 1198.6L1069.1 1194.5L1069.4 1197.5L1069.6 1186.0L1069.9 1202.4L1070.1 1204.5L1070.3 1176.8L1070.6 1198.0L1070.8 1185.2L1071.1 1206.1L1071.3 1192.1L1071.5 1201.4L1071.8 1204.3L1072.0 1203.6L1072.3 1198.8L1072.5 1202.6L1072.7 1188.9L1073.0 1195.6L1073.2 1203.4L1073.5 1188.0L1073.7 1201.4L1073.9 1200.5L1074.2 1203.7L1074.4 1203.7L1074.7 1205.0L1074.9 1198.9L1075.1 1188.5L1075.4 1203.8L1075.6 1191.8L1075.9 1199.9L1076.1 1203.5L1076.3 1208.0L1076.6 1186.6L1076.8 1192.6L1077.1 1197.7L1077.3 1204.4L1077.5 1195.5L1077.8 1200.5L1078.0 1205.3L1078.3 1204.8L1078.5 1202.4L1078.8 1199.5L1079.0 1203.9L1079.2 1201.3L1079.5 1192.4L1079.7 1196.6L1080.0 1192.9L1080.2 1202.4L1080.4 1188.3L1080.7 1204.0L1080.9 1203.3L1081.2 1207.5L1081.4 1204.6L1081.6 1196.3L1081.9 1198.5L1082.1 1198.1L1082.4 1204.0L1082.6 1201.5L1082.8 1200.8L1083.1 1197.8L1083.3 1196.7L1083.6 1200.5L1083.8 1197.2L1084.0 1198.2L1084.3 1206.1L1084.5 1200.9L1084.8 1201.6L1085.0 1198.7L1085.2 1190.8L1085.5 1198.0L1085.7 1202.7L1086.0 1206.5L1086.2 1197.1L1086.4 1196.8L1086.7 1200.9L1086.9 1190.9L1087.2 1185.3L1087.4 1206.5L1087.6 1196.3L1087.9 1198.4L1088.1 1196.1L1088.4 1191.1L1088.6 1205.6L1088.8 1199.7L1089.1 1190.4L1089.3 1188.7L1089.6 1196.8L1089.8 1199.5L1090.0 1199.9L1090.3 1206.3L1090.5 1205.1L1090.8 1191.0L1091.0 1199.8L1091.2 1203.9L1091.5 1205.6L1091.7 1202.2L1092.0 1193.3L1092.2 1200.8L1092.5 1196.3L1092.7 1202.9L1092.9 1193.4L1093.2 1197.5L1093.4 1204.4L1093.7 1193.2L1093.9 1205.0L1094.1 1202.7L1094.4 1205.0L1094.6 1205.1L1094.9 1201.0L1095.1 1198.3L1095.3 1207.3L1095.6 1201.3L1095.8 1199.8L1096.1 1201.6L1096.3 1197.6L1096.5 1203.5L1096.8 1205.9L1097.0 1204.8L1097.3 1196.9L1097.5 1190.4L1097.7 1204.6L1098.0 1193.8L1098.2 1202.0L1098.5 1196.9L1098.7 1204.5L1098.9 1200.3L1099.2 1201.1L1099.4 1202.4L1099.7 1202.6L1099.9 1206.3L1100.1 1197.6L1100.4 1198.5L1100.6 1195.6L1100.9 1200.0L1101.1 1195.1L1101.3 1205.5L1101.6 1203.8L1101.8 1202.7L1102.1 1203.5L1102.3 1205.6L1102.5 1185.6L1102.8 1203.2L1103.0 1203.5L1103.3 1201.1L1103.5 1202.6L1103.7 1199.1L1104.0 1198.6L1104.2 1208.3L1104.5 1199.2L1104.7 1199.8L1104.9 1203.5L1105.2 1199.9L1105.4 1201.8L1105.7 1199.6L1105.9 1203.9L1106.2 1208.5L1106.4 1200.9L1106.6 1193.7L1106.9 1204.1L1107.1 1201.0L1107.4 1197.0L1107.6 1192.4L1107.8 1202.1L1108.1 1202.3L1108.3 1205.4L1108.6 1204.7L1108.8 1197.1L1109.0 1196.2L1109.3 1201.8L1109.5 1207.1L1109.8 1205.6L1110.0 1206.8L1110.2 1201.4L1110.5 1198.4L1110.7 1192.4L1111.0 1198.2L1111.2 1200.8L1111.4 1205.6L1111.7 1205.4L1111.9 1190.1L1112.2 1198.4L1112.4 1200.3L1112.6 1201.2L1112.9 1200.2L1113.1 1200.7L1113.4 1200.3L1113.6 1202.0L1113.8 1200.6L1114.1 1199.2L1114.3 1200.0L1114.6 1198.8L1114.8 1197.5L1115.0 1195.7L1115.3 1202.6L1115.5 1201.2L1115.8 1201.7L1116.0 1200.9L1116.2 1205.0L1116.5 1197.4L1116.7 1205.5L1117.0 1195.8L1117.2 1200.4L1117.4 1202.1L1117.7 1201.5L1117.9 1207.0L1118.2 1199.6L1118.4 1196.6L1118.6 1186.9L1118.9 1189.8L1119.1 1204.7L1119.4 1195.9L1119.6 1207.2L1119.9 1205.0L1120.1 1206.2L1120.3 1207.7L1120.6 1203.4L1120.8 1202.4L1121.1 1203.7L1121.3 1203.8L1121.5 1199.7L1121.8 1196.1L1122.0 1201.8L1122.3 1196.5L1122.5 1199.7L1122.7 1203.6L1123.0 1184.7L1123.2 1201.5L1123.5 1193.2L1123.7 1201.9L1123.9 1201.0L1124.2 1195.3L1124.4 1196.5L1124.7 1203.2L1124.9 1204.0L1125.1 1192.5L1125.4 1196.2L1125.6 1193.2L1125.9 1203.3L1126.1 1203.2L1126.3 1198.3L1126.6 1192.8L1126.8 1200.0L1127.1 1201.9L1127.3 1207.1L1127.5 1199.3L1127.8 1198.7L1128.0 1204.4L1128.3 1198.0L1128.5 1201.1L1128.7 1195.4L1129.0 1199.3L1129.2 1199.7L1129.5 1204.6L1129.7 1202.8L1129.9 1207.7L1130.2 1196.4L1130.4 1205.6L1130.7 1200.7L1130.9 1186.6L1131.1 1202.1L1131.4 1193.9L1131.6 1199.3L1131.9 1200.8L1132.1 1190.6L1132.3 1202.1L1132.6 1207.2L1132.8 1201.9L1133.1 1205.2L1133.3 1201.2L1133.5 1200.3L1133.8 1201.7L1134.0 1202.7L1134.3 1203.7L1134.5 1206.2L1134.8 1205.3L1135.0 1206.3L1135.2 1164.6L1135.5 1203.7L1135.7 1201.4L1136.0 1201.7L1136.2 1203.1L1136.4 1206.0L1136.7 1199.6L1136.9 1202.9L1137.2 1199.4L1137.4 1193.6L1137.6 1200.2L1137.9 1201.0L1138.1 1204.2L1138.4 1204.7L1138.6 1201.0L1138.8 1202.7L1139.1 1203.0L1139.3 1204.2L1139.6 1204.0L1139.8 1201.4L1140.0 1202.9L1140.3 1208.2L1140.5 1204.4L1140.8 1204.8L1141.0 1202.9L1141.2 1201.5L1141.5 1205.0L1141.7 1202.4L1142.0 1205.6L1142.2 1197.1L1142.4 1191.9L1142.7 1204.1L1142.9 1198.2L1143.2 1203.4L1143.4 1203.1L1143.6 1206.1L1143.9 1205.6L1144.1 1196.5L1144.4 1202.6L1144.6 1204.7L1144.8 1199.4L1145.1 1205.7L1145.3 1192.7L1145.6 1199.2L1145.8 1204.8L1146.0 1202.6L1146.3 1199.9L1146.5 1203.1L1146.8 1197.1L1147.0 1206.3L1147.2 1206.8L1147.5 1201.7L1147.7 1204.5L1148.0 1204.3L1148.2 1201.4L1148.5 1203.0L1148.7 1192.5L1148.9 1200.6L1149.2 1204.9L1149.4 1192.7L1149.7 1197.7L1149.9 1206.1L1150.1 1200.1L1150.4 1204.8L1150.6 1199.8L1150.9 1190.9L1151.1 1205.2L1151.3 1201.2L1151.6 1203.5L1151.8 1197.6L1152.1 1199.2L1152.3 1207.4L1152.5 1205.4L1152.8 1204.4L1153.0 1205.1L1153.3 1198.7L1153.5 1196.6L1153.7 1203.3L1154.0 1206.6L1154.2 1201.0L1154.5 1203.4L1154.7 1194.4L1154.9 1187.8L1155.2 1206.1L1155.4 1200.7L1155.7 1205.2L1155.9 1170.8L1156.1 1191.5L1156.4 1195.8L1156.6 1201.3L1156.9 1206.2L1157.1 1204.4L1157.3 1202.3L1157.6 1202.8L1157.8 1203.6L1158.1 1176.2L1158.3 1203.0L1158.5 1203.6L1158.8 1200.1L1159.0 1198.4L1159.3 1193.3L1159.5 1201.4L1159.7 1199.7L1160.0 1191.2L1160.2 1206.2L1160.5 1203.7L1160.7 1199.2L1160.9 1201.2L1161.2 1205.6L1161.4 1204.7L1161.7 1198.0L1161.9 1204.2L1162.2 1195.9L1162.4 1204.6L1162.6 1199.1L1162.9 1208.0L1163.1 1196.4L1163.4 1203.5L1163.6 1197.6L1163.8 1206.9L1164.1 1205.5L1164.3 1201.4L1164.6 1201.5L1164.8 1203.1L1165.0 1207.2L1165.3 1204.5L1165.5 1192.9L1165.8 1205.1L1166.0 1200.8L1166.2 1202.6L1166.5 1190.9L1166.7 1186.6L1167.0 1204.2L1167.2 1199.5L1167.4 1191.8L1167.7 1207.3L1167.9 1198.8L1168.2 1192.7L1168.4 1206.0L1168.6 1202.8L1168.9 1198.1L1169.1 1206.8L1169.4 1205.6L1169.6 1202.5L1169.8 1205.2L1170.1 1197.1L1170.3 1200.6L1170.6 1204.8L1170.8 1203.3L1171.0 1204.3L1171.3 1197.0L1171.5 1198.2L1171.8 1200.9L1172.0 1196.2L1172.2 1201.2L1172.5 1204.6L1172.7 1198.0L1173.0 1194.3L1173.2 1196.7L1173.4 1205.3L1173.7 1194.4L1173.9 1196.5L1174.2 1207.4L1174.4 1206.0L1174.6 1200.8L1174.9 1198.0L1175.1 1207.4L1175.4 1205.5L1175.6 1205.2L1175.9 1205.4L1176.1 1201.5L1176.3 1204.0L1176.6 1203.0L1176.8 1202.4L1177.1 1190.5L1177.3 1203.0L1177.5 1207.9L1177.8 1194.6L1178.0 1198.4L1178.3 1196.3L1178.5 1203.9L1178.7 1203.1L1179.0 1200.3L1179.2 1198.4L1179.5 1198.5L1179.7 1198.8L1179.9 1199.5L1180.2 1206.1L1180.4 1199.7L1180.7 1193.2L1180.9 1205.6L1181.1 1206.5L1181.4 1200.6L1181.6 1197.9L1181.9 1202.3L1182.1 1200.3L1182.3 1193.2L1182.6 1201.9L1182.8 1198.6L1183.1 1202.3L1183.3 1200.1L1183.5 1203.1L1183.8 1205.8L1184.0 1205.0L1184.3 1202.4L1184.5 1204.5L1184.7 1195.4L1185.0 1201.4L1185.2 1198.9L1185.5 1192.1L1185.7 1205.2L1185.9 1203.5L1186.2 1202.8L1186.4 1201.5L1186.7 1203.2L1186.9 1208.0L1187.1 1201.5L1187.4 1204.6L1187.6 1206.4L1187.9 1203.1L1188.1 1203.3L1188.3 1200.6L1188.6 1205.7L1188.8 1204.2L1189.1 1187.9L1189.3 1202.1L1189.6 1198.8L1189.8 1204.8L1190.0 1208.0L1190.3 1197.7L1190.5 1205.6L1190.8 1204.2L1191.0 1198.8L1191.2 1194.4L1191.5 1200.0L1191.7 1206.7L1192.0 1205.9L1192.2 1196.6L1192.4 1202.5L1192.7 1206.3L1192.9 1206.9L1193.2 1190.8L1193.4 1202.0L1193.6 1207.1L1193.9 1205.8L1194.1 1208.0L1194.4 1183.4L1194.6 1207.6L1194.8 1184.7L1195.1 1202.9L1195.3 1203.8L1195.6 1197.5L1195.8 1197.6L1196.0 1206.8L1196.3 1186.7L1196.5 1202.2L1196.8 1201.6L1197.0 1203.4L1197.2 1196.6L1197.5 1203.6L1197.7 1202.6L1198.0 1199.1L1198.2 1207.0L1198.4 1196.7L1198.7 1206.2L1198.9 1202.4L1199.2 1207.7L1199.4 1199.0L1199.6 1196.8L1199.9 1192.1L1200.1 1190.2L1200.4 1197.5L1200.6 1202.8L1200.8 1202.5L1201.1 1199.0L1201.3 1204.5L1201.6 1195.2L1201.8 1192.3L1202.0 1206.7L1202.3 1196.6L1202.5 1199.0L1202.8 1200.1L1203.0 1203.0L1203.3 1191.9L1203.5 1202.3L1203.7 1200.1L1204.0 1205.8L1204.2 1202.7L1204.5 1203.4L1204.7 1203.2L1204.9 1204.0L1205.2 1205.2L1205.4 1194.0L1205.7 1205.1L1205.9 1202.8L1206.1 1205.7L1206.4 1194.8L1206.6 1184.3L1206.9 1202.3L1207.1 1203.5L1207.3 1203.1L1207.6 1205.8L1207.8 1205.4L1208.1 1202.1L1208.3 1199.1L1208.5 1205.8L1208.8 1202.2L1209.0 1204.9L1209.3 1192.4L1209.5 1195.2L1209.7 1201.3L1210.0 1203.2L1210.2 1204.8L1210.5 1202.8L1210.7 1205.0L1210.9 1190.5L1211.2 1206.1L1211.4 1206.9L1211.7 1193.3L1211.9 1190.2L1212.1 1200.0L1212.4 1203.9L1212.6 1200.0L1212.9 1203.3L1213.1 1203.8L1213.3 1207.3L1213.6 1199.4L1213.8 1202.3L1214.1 1176.3L1214.3 1207.0L1214.5 1203.8L1214.8 1202.0L1215.0 1199.4L1215.3 1203.9L1215.5 1203.0L1215.7 1200.3L1216.0 1201.8L1216.2 1199.0L1216.5 1204.8L1216.7 1203.8L1217.0 1195.9L1217.2 1193.8L1217.4 1198.1L1217.7 1197.1L1217.9 1197.9L1218.2 1206.2L1218.4 1205.2L1218.6 1200.0L1218.9 1199.5L1219.1 1190.4L1219.4 1200.9L1219.6 1208.3L1219.8 1201.8L1220.1 1201.5L1220.3 1204.7L1220.6 1202.0L1220.8 1206.1L1221.0 1207.6L1221.3 1198.5L1221.5 1193.0L1221.8 1207.0L1222.0 1195.1L1222.2 1199.9L1222.5 1198.8L1222.7 1197.4L1223.0 1198.1L1223.2 1200.3L1223.4 1199.4L1223.7 1205.4L1223.9 1201.1L1224.2 1206.4L1224.4 1203.8L1224.6 1202.1L1224.9 1204.2L1225.1 1201.5L1225.4 1198.5L1225.6 1205.6L1225.8 1199.3L1226.1 1206.1L1226.3 1199.6L1226.6 1201.7L1226.8 1196.1L1227.0 1204.2L1227.3 1205.7L1227.5 1203.9L1227.8 1202.3L1228.0 1201.8L1228.2 1200.8L1228.5 1204.0L1228.7 1202.4L1229.0 1195.2L1229.2 1203.5L1229.4 1195.5L1229.7 1202.9L1229.9 1190.3L1230.2 1206.8L1230.4 1190.0L1230.7 1204.4L1230.9 1204.9L1231.1 1204.6L1231.4 1204.3L1231.6 1197.4L1231.9 1195.8L1232.1 1192.9L1232.3 1205.2L1232.6 1207.7L1232.8 1206.8L1233.1 1204.2L1233.3 1198.5L1233.5 1206.5L1233.8 1207.1L1234.0 1198.1L1234.3 1201.9L1234.5 1206.2L1234.7 1203.9L1235.0 1204.6L1235.2 1206.2L1235.5 1199.1L1235.7 1199.2L1235.9 1203.9L1236.2 1196.2L1236.4 1199.1L1236.7 1194.0L1236.9 1203.1L1237.1 1199.7L1237.4 1204.8L1237.6 1203.0L1237.9 1205.4L1238.1 1205.3L1238.3 1207.0L1238.6 1201.2L1238.8 1208.6L1239.1 1206.8L1239.3 1202.3L1239.5 1205.4L1239.8 1203.3L1240.0 1207.3L1240.3 1196.9L1240.5 1203.2L1240.7 1203.9L1241.0 1201.5L1241.2 1203.7L1241.5 1206.8L1241.7 1203.0L1241.9 1206.8L1242.2 1204.9L1242.4 1206.2L1242.7 1203.8L1242.9 1206.0L1243.1 1200.1L1243.4 1197.8L1243.6 1200.7L1243.9 1204.2L1244.1 1209.9L1244.4 1204.1L1244.6 1183.4L1244.8 1202.4L1245.1 1205.2L1245.3 1205.5L1245.6 1207.9L1245.8 1199.5L1246.0 1206.6L1246.3 1201.9L1246.5 1206.2L1246.8 1189.0L1247.0 1207.9L1247.2 1204.8L1247.5 1205.5L1247.7 1202.6L1248.0 1205.9L1248.2 1201.1L1248.4 1205.5L1248.7 1205.4L1248.9 1201.9L1249.2 1183.8L1249.4 1203.0L1249.6 1194.4L1249.9 1203.1L1250.1 1191.3L1250.4 1205.8L1250.6 1201.3L1250.8 1206.6L1251.1 1204.2L1251.3 1186.6L1251.6 1194.1L1251.8 1201.5L1252.0 1205.3L1252.3 1208.0L1252.5 1202.7L1252.8 1201.5L1253.0 1202.8L1253.2 1195.6L1253.5 1203.9L1253.7 1196.6L1254.0 1205.5L1254.2 1204.6L1254.4 1202.7L1254.7 1201.5L1254.9 1197.6L1255.2 1204.2L1255.4 1203.8L1255.6 1207.3L1255.9 1203.1L1256.1 1207.1L1256.4 1205.7L1256.6 1197.7L1256.8 1203.0L1257.1 1196.9L1257.3 1199.7L1257.6 1197.9L1257.8 1200.2L1258.1 1202.5L1258.3 1206.3L1258.5 1195.9L1258.8 1203.1L1259.0 1204.9L1259.3 1207.9L1259.5 1202.6L1259.7 1204.6L1260.0 1200.8L1260.2 1197.3L1260.5 1207.6L1260.7 1199.7L1260.9 1202.5L1261.2 1206.5L1261.4 1206.7L1261.7 1208.0L1261.9 1205.9L1262.1 1203.6L1262.4 1197.6L1262.6 1202.8L1262.9 1203.3L1263.1 1205.5L1263.3 1205.8L1263.6 1205.1L1263.8 1202.0L1264.1 1206.7L1264.3 1203.1L1264.5 1199.3L1264.8 1203.2L1265.0 1205.0L1265.3 1202.7L1265.5 1200.9L1265.7 1198.9L1266.0 1203.8L1266.2 1203.7L1266.5 1204.0L1266.7 1202.4L1266.9 1193.8L1267.2 1207.9L1267.4 1203.4L1267.7 1202.5L1267.9 1201.7L1268.1 1206.0L1268.4 1205.2L1268.6 1205.2L1268.9 1205.7L1269.1 1190.6L1269.3 1208.2L1269.6 1204.7L1269.8 1206.6L1270.1 1204.5L1270.3 1205.2L1270.5 1205.8L1270.8 1205.3L1271.0 1205.4L1271.3 1208.2L1271.5 1206.2L1271.8 1201.8L1272.0 1202.4L1272.2 1207.9L1272.5 1206.3L1272.7 1201.8L1273.0 1201.2L1273.2 1206.0L1273.4 1203.5L1273.7 1202.8L1273.9 1201.1L1274.2 1203.8L1274.4 1202.4L1274.6 1205.7L1274.9 1199.9L1275.1 1201.8L1275.4 1199.5L1275.6 1207.7L1275.8 1199.7L1276.1 1201.0L1276.3 1204.5L1276.6 1196.1L1276.8 1197.4L1277.0 1201.3L1277.3 1208.4L1277.5 1198.0L1277.8 1201.5L1278.0 1204.8L1278.2 1208.3L1278.5 1207.3L1278.7 1198.5L1279.0 1204.6L1279.2 1207.1L1279.4 1207.2L1279.7 1206.5L1279.9 1202.5L1280.2 1201.5L1280.4 1200.7L1280.6 1207.6L1280.9 1204.2L1281.1 1206.6L1281.4 1206.1L1281.6 1206.6L1281.8 1195.3L1282.1 1204.2L1282.3 1205.2L1282.6 1205.6L1282.8 1200.7L1283.0 1201.1L1283.3 1199.6L1283.5 1206.2L1283.8 1197.4L1284.0 1198.1L1284.2 1206.5L1284.5 1199.2L1284.7 1204.8L1285.0 1205.2L1285.2 1175.3L1285.5 1199.3L1285.7 1201.5L1285.9 1204.6L1286.2 1204.8L1286.4 1205.8L1286.7 1205.6L1286.9 1203.8L1287.1 1199.7L1287.4 1203.2L1287.6 1197.6L1287.9 1200.1L1288.1 1201.7L1288.3 1205.2L1288.6 1207.3L1288.8 1202.0L1289.1 1200.2L1289.3 1202.8L1289.5 1202.9L1289.8 1202.5L1290.0 1202.0L1290.3 1200.3L1290.5 1199.6L1290.7 1206.9L1291.0 1203.6L1291.2 1201.8L1291.5 1206.1L1291.7 1206.7L1291.9 1201.4L1292.2 1191.1L1292.4 1206.2L1292.7 1204.0L1292.9 1207.2L1293.1 1205.6L1293.4 1206.0L1293.6 1203.9L1293.9 1201.6L1294.1 1204.8L1294.3 1194.8L1294.6 1203.7L1294.8 1203.4L1295.1 1192.6L1295.3 1205.1L1295.5 1207.5L1295.8 1204.7L1296.0 1205.9L1296.3 1205.6L1296.5 1204.8L1296.7 1205.3L1297.0 1204.6L1297.2 1203.7L1297.5 1201.2L1297.7 1199.3L1297.9 1204.1L1298.2 1207.9L1298.4 1207.2L1298.7 1199.1L1298.9 1204.1L1299.2 1197.7L1299.4 1207.6L1299.6 1203.8L1299.9 1197.8L1300.1 1205.4L1300.4 1205.3L1300.6 1202.3L1300.8 1204.5L1301.1 1203.7L1301.3 1204.8L1301.6 1205.2L1301.8 1206.7L1302.0 1203.8L1302.3 1202.7L1302.5 1201.4L1302.8 1204.9L1303.0 1205.6L1303.2 1208.8L1303.5 1201.1L1303.7 1203.7L1304.0 1207.8L1304.2 1204.3L1304.4 1207.9" stroke="#ff7043" stroke-opacity="0.2" stroke-width="3.5" fill="none" stroke-linejoin="round"/><path d="M911.9 815.3L912.2 833.1L912.4 850.9L912.7 868.7L912.9 886.5L913.1 904.3L913.4 922.0L913.6 938.5L913.9 950.6L914.1 962.8L914.4 974.9L914.6 982.3L914.8 985.9L915.1 989.5L915.3 993.1L915.6 996.7L915.8 1000.3L916.0 1003.9L916.3 1007.5L916.5 1011.1L916.8 1014.3L917.0 1016.7L917.2 1019.1L917.5 1021.5L917.7 1023.9L918.0 1026.3L918.2 1028.7L918.4 1031.1L918.7 1033.5L918.9 1035.9L919.2 1038.3L919.4 1040.7L919.6 1043.0L919.9 1045.0L920.1 1047.1L920.4 1049.1L920.6 1051.1L920.8 1053.2L921.1 1055.2L921.3 1057.2L921.6 1059.3L921.8 1061.3L922.0 1063.3L922.3 1065.4L922.5 1067.4L922.8 1069.4L923.0 1071.4L923.2 1073.4L923.5 1075.4L923.7 1077.4L924.0 1079.4L924.2 1081.4L924.4 1083.4L924.7 1085.4L924.9 1087.4L925.2 1089.3L925.4 1090.9L925.6 1092.5L925.9 1094.1L926.1 1095.7L926.4 1097.3L926.6 1098.9L926.8 1100.5L927.1 1102.1L927.3 1103.7L927.6 1105.3L927.8 1106.9L928.1 1108.5L928.3 1110.1L928.5 1111.4L928.8 1112.5L929.0 1113.6L929.3 1114.8L929.5 1115.9L929.7 1117.0L930.0 1118.1L930.2 1119.2L930.5 1120.4L930.7 1121.5L930.9 1122.6L931.2 1123.7L931.4 1124.9L931.7 1126.0L931.9 1126.8L932.1 1127.5L932.4 1128.2L932.6 1128.9L932.9 1129.7L933.1 1130.4L933.3 1131.1L933.6 1131.8L933.8 1132.5L934.1 1133.3L934.3 1134.0L934.5 1134.7L934.8 1135.4L935.0 1136.1L935.3 1136.8L935.5 1137.5L935.7 1138.1L936.0 1138.9L936.2 1139.6L936.5 1140.3L936.7 1140.8L936.9 1141.3L937.2 1141.9L937.4 1142.8L937.7 1143.4L937.9 1144.0L938.1 1144.7L938.4 1145.3L938.6 1146.1L938.9 1146.6L939.1 1147.1L939.3 1147.8L939.6 1148.5L939.8 1149.2L940.1 1149.8L940.3 1150.1L940.5 1150.5L940.8 1150.7L941.0 1151.0L941.3 1151.5L941.5 1151.9L941.8 1152.4L942.0 1152.9L942.2 1153.2L942.5 1153.6L942.7 1154.1L943.0 1154.8L943.2 1155.1L943.4 1155.5L943.7 1155.5L943.9 1156.4L944.2 1157.3L944.4 1157.6L944.6 1157.8L944.9 1157.8L945.1 1158.1L945.4 1158.4L945.6 1159.3L945.8 1159.5L946.1 1159.4L946.3 1158.8L946.6 1159.6L946.8 1159.9L947.0 1159.4L947.3 1159.7L947.5 1159.4L947.8 1161.0L948.0 1161.7L948.2 1162.1L948.5 1162.2L948.7 1161.5L949.0 1161.7L949.2 1161.4L949.4 1161.9L949.7 1161.3L949.9 1161.1L950.2 1161.9L950.4 1162.9L950.6 1162.6L950.9 1162.1L951.1 1162.8L951.4 1163.6L951.6 1163.4L951.8 1163.4L952.1 1163.4L952.3 1163.0L952.6 1162.9L952.8 1163.9L953.0 1164.5L953.3 1165.9L953.5 1166.0L953.8 1166.2L954.0 1165.9L954.2 1166.1L954.5 1165.6L954.7 1164.9L955.0 1165.6L955.2 1166.8L955.5 1167.5L955.7 1168.5L955.9 1168.8L956.2 1168.5L956.4 1168.7L956.7 1168.7L956.9 1168.2L957.1 1167.4L957.4 1166.8L957.6 1167.2L957.9 1167.6L958.1 1167.6L958.3 1168.8L958.6 1169.2L958.8 1169.9L959.1 1170.9L959.3 1170.7L959.5 1169.7L959.8 1170.5L960.0 1170.5L960.3 1171.7L960.5 1172.2L960.7 1173.1L961.0 1173.8L961.2 1172.7L961.5 1173.4L961.7 1173.1L961.9 1172.9L962.2 1173.0L962.4 1173.8L962.7 1174.7L962.9 1175.5L963.1 1174.7L963.4 1174.5L963.6 1173.3L963.9 1173.4L964.1 1173.8L964.3 1173.4L964.6 1173.6L964.8 1173.8L965.1 1174.4L965.3 1173.9L965.5 1173.3L965.8 1172.8L966.0 1173.9L966.3 1174.5L966.5 1174.4L966.7 1174.5L967.0 1174.4L967.2 1174.4L967.5 1174.2L967.7 1173.9L967.9 1173.0L968.2 1172.6L968.4 1173.6L968.7 1173.9L968.9 1174.0L969.2 1173.8L969.4 1173.8L969.6 1174.0L969.9 1173.5L970.1 1173.6L970.4 1173.8L970.6 1173.3L970.8 1172.8L971.1 1172.2L971.3 1171.6L971.6 1172.3L971.8 1171.0L972.0 1171.1L972.3 1171.0L972.5 1170.9L972.8 1171.2L973.0 1172.1L973.2 1172.4L973.5 1172.5L973.7 1172.2L974.0 1172.3L974.2 1173.1L974.4 1173.0L974.7 1172.5L974.9 1171.8L975.2 1171.3L975.4 1170.6L975.6 1171.5L975.9 1171.8L976.1 1171.8L976.4 1172.8L976.6 1172.6L976.8 1173.2L977.1 1173.9L977.3 1173.0L977.6 1172.2L977.8 1171.7L978.0 1172.4L978.3 1173.3L978.5 1172.6L978.8 1173.4L979.0 1173.1L979.2 1172.9L979.5 1172.6L979.7 1172.4L980.0 1171.3L980.2 1170.8L980.4 1170.3L980.7 1171.1L980.9 1172.8L981.2 1174.8L981.4 1174.8L981.6 1173.9L981.9 1174.0L982.1 1173.7L982.4 1175.3L982.6 1175.9L982.9 1175.7L983.1 1176.5L983.3 1177.1L983.6 1176.2L983.8 1176.1L984.1 1176.2L984.3 1176.4L984.5 1176.7L984.8 1176.8L985.0 1177.2L985.3 1177.1L985.5 1176.8L985.7 1178.0L986.0 1178.4L986.2 1179.0L986.5 1178.2L986.7 1178.4L986.9 1179.2L987.2 1178.4L987.4 1179.0L987.7 1178.7L987.9 1178.9L988.1 1178.7L988.4 1178.7L988.6 1179.4L988.9 1179.0L989.1 1179.8L989.3 1179.1L989.6 1178.5L989.8 1178.9L990.1 1178.1L990.3 1177.8L990.5 1178.3L990.8 1178.9L991.0 1177.7L991.3 1178.0L991.5 1179.1L991.7 1179.7L992.0 1179.4L992.2 1179.0L992.5 1178.7L992.7 1178.0L992.9 1177.8L993.2 1177.6L993.4 1177.5L993.7 1178.1L993.9 1177.8L994.1 1176.8L994.4 1177.5L994.6 1176.7L994.9 1176.4L995.1 1176.4L995.3 1176.2L995.6 1175.6L995.8 1175.4L996.1 1177.0L996.3 1176.7L996.6 1176.7L996.8 1177.4L997.0 1178.0L997.3 1178.5L997.5 1179.1L997.8 1177.8L998.0 1177.4L998.2 1177.5L998.5 1177.8L998.7 1178.5L999.0 1178.7L999.2 1178.5L999.4 1178.4L999.7 1178.3L999.9 1178.4L1000.2 1178.8L1000.4 1178.6L1000.6 1178.1L1000.9 1177.6L1001.1 1178.4L1001.4 1179.2L1001.6 1179.8L1001.8 1180.3L1002.1 1180.8L1002.3 1180.7L1002.6 1181.1L1002.8 1180.4L1003.0 1180.4L1003.3 1179.9L1003.5 1180.5L1003.8 1180.2L1004.0 1180.2L1004.2 1180.5L1004.5 1181.2L1004.7 1180.6L1005.0 1179.9L1005.2 1180.3L1005.4 1179.5L1005.7 1179.7L1005.9 1179.2L1006.2 1179.1L1006.4 1177.8L1006.6 1178.3L1006.9 1177.9L1007.1 1177.3L1007.4 1178.6L1007.6 1179.0L1007.8 1181.1L1008.1 1181.2L1008.3 1180.8L1008.6 1180.7L1008.8 1181.6L1009.0 1181.4L1009.3 1181.6L1009.5 1181.7L1009.8 1181.0L1010.0 1181.0L1010.3 1180.5L1010.5 1179.6L1010.7 1180.0L1011.0 1180.4L1011.2 1180.3L1011.5 1179.9L1011.7 1178.8L1011.9 1179.4L1012.2 1179.5L1012.4 1178.7L1012.7 1179.0L1012.9 1178.3L1013.1 1178.7L1013.4 1179.0L1013.6 1179.5L1013.9 1179.9L1014.1 1180.2L1014.3 1179.7L1014.6 1179.7L1014.8 1179.7L1015.1 1179.8L1015.3 1180.2L1015.5 1180.8L1015.8 1182.0L1016.0 1180.5L1016.3 1181.0L1016.5 1181.0L1016.7 1182.6L1017.0 1183.3L1017.2 1182.3L1017.5 1182.7L1017.7 1182.5L1017.9 1183.2L1018.2 1182.6L1018.4 1182.6L1018.7 1182.6L1018.9 1182.7L1019.1 1182.6L1019.4 1181.9L1019.6 1182.5L1019.9 1183.6L1020.1 1183.8L1020.3 1183.6L1020.6 1184.1L1020.8 1184.8L1021.1 1185.0L1021.3 1185.3L1021.5 1186.5L1021.8 1186.1L1022.0 1186.1L1022.3 1185.2L1022.5 1185.1L1022.7 1185.1L1023.0 1184.9L1023.2 1184.9L1023.5 1186.5L1023.7 1186.8L1024.0 1187.2L1024.2 1188.9L1024.4 1189.2L1024.7 1188.4L1024.9 1189.0L1025.2 1188.8L1025.4 1190.1L1025.6 1189.6L1025.9 1189.5L1026.1 1188.7L1026.4 1189.1L1026.6 1188.7L1026.8 1189.0L1027.1 1189.1L1027.3 1189.1L1027.6 1190.0L1027.8 1191.0L1028.0 1191.3L1028.3 1191.1L1028.5 1190.8L1028.8 1191.3L1029.0 1193.2L1029.2 1193.2L1029.5 1193.0L1029.7 1192.8L1030.0 1192.4L1030.2 1191.9L1030.4 1191.8L1030.7 1192.7L1030.9 1192.6L1031.2 1192.2L1031.4 1191.2L1031.6 1191.3L1031.9 1191.2L1032.1 1190.4L1032.4 1189.7L1032.6 1189.7L1032.8 1190.3L1033.1 1190.7L1033.3 1190.8L1033.6 1190.5L1033.8 1190.6L1034.0 1190.5L1034.3 1191.7L1034.5 1190.7L1034.8 1190.3L1035.0 1190.9L1035.2 1190.5L1035.5 1191.1L1035.7 1190.8L1036.0 1190.6L1036.2 1190.1L1036.4 1189.0L1036.7 1188.2L1036.9 1189.5L1037.2 1189.7L1037.4 1189.9L1037.7 1190.2L1037.9 1190.4L1038.1 1191.0L1038.4 1190.8L1038.6 1190.6L1038.9 1191.2L1039.1 1190.9L1039.3 1190.0L1039.6 1189.9L1039.8 1189.5L1040.1 1189.9L1040.3 1189.4L1040.5 1188.7L1040.8 1188.5L1041.0 1189.5L1041.3 1189.5L1041.5 1189.6L1041.7 1189.6L1042.0 1189.8L1042.2 1190.4L1042.5 1191.4L1042.7 1190.4L1042.9 1191.3L1043.2 1191.3L1043.4 1191.0L1043.7 1192.5L1043.9 1192.4L1044.1 1193.5L1044.4 1194.0L1044.6 1193.3L1044.9 1193.6L1045.1 1194.0L1045.3 1193.8L1045.6 1192.4L1045.8 1192.2L1046.1 1192.2L1046.3 1191.6L1046.5 1192.9L1046.8 1192.8L1047.0 1192.5L1047.3 1192.3L1047.5 1191.8L1047.7 1191.3L1048.0 1191.4L1048.2 1191.6L1048.5 1191.3L1048.7 1191.2L1048.9 1190.3L1049.2 1190.6L1049.4 1190.2L1049.7 1190.3L1049.9 1189.7L1050.1 1189.4L1050.4 1189.6L1050.6 1188.9L1050.9 1190.5L1051.1 1190.5L1051.4 1190.7L1051.6 1190.4L1051.8 1191.6L1052.1 1192.6L1052.3 1192.9L1052.6 1192.1L1052.8 1191.9L1053.0 1192.4L1053.3 1192.1L1053.5 1191.5L1053.8 1190.9L1054.0 1190.6L1054.2 1190.8L1054.5 1190.5L1054.7 1190.8L1055.0 1192.7L1055.2 1194.0L1055.4 1193.5L1055.7 1193.8L1055.9 1194.0L1056.2 1194.1L1056.4 1194.9L1056.6 1194.8L1056.9 1194.7L1057.1 1194.6L1057.4 1194.6L1057.6 1195.5L1057.8 1196.0L1058.1 1195.1L1058.3 1194.7L1058.6 1194.2L1058.8 1194.8L1059.0 1195.0L1059.3 1195.7L1059.5 1195.7L1059.8 1194.6L1060.0 1195.0L1060.2 1195.3L1060.5 1195.8L1060.7 1195.1L1061.0 1195.3L1061.2 1195.0L1061.4 1194.7L1061.7 1195.0L1061.9 1195.4L1062.2 1194.9L1062.4 1194.0L1062.6 1192.6L1062.9 1192.6L1063.1 1193.6L1063.4 1193.7L1063.6 1192.5L1063.8 1192.2L1064.1 1192.7L1064.3 1193.9L1064.6 1194.8L1064.8 1195.1L1065.1 1195.3L1065.3 1194.7L1065.5 1194.5L1065.8 1194.4L1066.0 1194.0L1066.3 1194.0L1066.5 1193.8L1066.7 1194.1L1067.0 1195.0L1067.2 1195.4L1067.5 1195.5L1067.7 1195.3L1067.9 1194.3L1068.2 1194.2L1068.4 1194.6L1068.7 1194.0L1068.9 1194.7L1069.1 1194.5L1069.4 1194.6L1069.6 1194.4L1069.9 1193.5L1070.1 1194.8L1070.3 1194.0L1070.6 1194.5L1070.8 1194.1L1071.1 1194.2L1071.3 1193.7L1071.5 1193.4L1071.8 1193.9L1072.0 1195.1L1072.3 1194.4L1072.5 1194.3L1072.7 1194.8L1073.0 1194.2L1073.2 1194.5L1073.5 1193.9L1073.7 1194.2L1073.9 1194.3L1074.2 1195.0L1074.4 1195.0L1074.7 1194.1L1074.9 1194.4L1075.1 1193.7L1075.4 1194.1L1075.6 1195.0L1075.9 1195.2L1076.1 1194.8L1076.3 1195.5L1076.6 1195.5L1076.8 1194.6L1077.1 1194.3L1077.3 1195.1L1077.5 1194.8L1077.8 1194.8L1078.0 1194.5L1078.3 1193.3L1078.5 1193.0L1078.8 1193.3L1079.0 1193.4L1079.2 1193.3L1079.5 1192.0L1079.7 1192.8L1080.0 1193.4L1080.2 1194.1L1080.4 1194.9L1080.7 1194.6L1080.9 1194.2L1081.2 1194.4L1081.4 1195.5L1081.6 1194.4L1081.9 1194.3L1082.1 1193.8L1082.4 1194.2L1082.6 1195.1L1082.8 1194.9L1083.1 1194.1L1083.3 1194.1L1083.6 1194.0L1083.8 1193.1L1084.0 1193.8L1084.3 1193.6L1084.5 1194.1L1084.8 1193.5L1085.0 1194.4L1085.2 1193.6L1085.5 1194.5L1085.7 1193.4L1086.0 1194.5L1086.2 1194.3L1086.4 1193.4L1086.7 1193.4L1086.9 1193.7L1087.2 1193.1L1087.4 1192.8L1087.6 1193.0L1087.9 1192.9L1088.1 1191.1L1088.4 1190.9L1088.6 1191.4L1088.8 1191.7L1089.1 1192.5L1089.3 1192.1L1089.6 1193.7L1089.8 1194.2L1090.0 1194.3L1090.3 1195.1L1090.5 1195.7L1090.8 1195.8L1091.0 1195.4L1091.2 1196.0L1091.5 1196.2L1091.7 1194.9L1092.0 1194.2L1092.2 1194.4L1092.5 1194.5L1092.7 1194.7L1092.9 1195.0L1093.2 1195.1L1093.4 1196.0L1093.7 1195.5L1093.9 1195.2L1094.1 1195.4L1094.4 1195.9L1094.6 1196.3L1094.9 1197.1L1095.1 1196.6L1095.3 1197.2L1095.6 1197.3L1095.8 1196.5L1096.1 1196.3L1096.3 1197.5L1096.5 1197.8L1096.8 1197.3L1097.0 1195.6L1097.3 1195.1L1097.5 1194.6L1097.7 1194.6L1098.0 1196.0L1098.2 1196.5L1098.5 1196.6L1098.7 1196.0L1098.9 1195.2L1099.2 1195.1L1099.4 1194.9L1099.7 1196.7L1099.9 1196.5L1100.1 1196.2L1100.4 1197.0L1100.6 1197.1L1100.9 1196.3L1101.1 1197.0L1101.3 1196.7L1101.6 1195.8L1101.8 1196.0L1102.1 1196.3L1102.3 1196.1L1102.5 1196.4L1102.8 1196.9L1103.0 1196.2L1103.3 1195.0L1103.5 1193.5L1103.7 1193.6L1104.0 1194.5L1104.2 1195.2L1104.5 1196.0L1104.7 1197.2L1104.9 1197.2L1105.2 1197.8L1105.4 1196.7L1105.7 1197.1L1105.9 1197.3L1106.2 1197.3L1106.4 1197.0L1106.6 1196.3L1106.9 1196.3L1107.1 1197.0L1107.4 1196.6L1107.6 1196.8L1107.8 1196.3L1108.1 1196.4L1108.3 1195.8L1108.6 1196.1L1108.8 1196.0L1109.0 1196.2L1109.3 1195.8L1109.5 1195.8L1109.8 1195.8L1110.0 1196.1L1110.2 1196.6L1110.5 1196.5L1110.7 1196.7L1111.0 1196.9L1111.2 1197.0L1111.4 1196.5L1111.7 1196.5L1111.9 1196.2L1112.2 1196.5L1112.4 1196.6L1112.6 1196.7L1112.9 1195.9L1113.1 1196.1L1113.4 1196.2L1113.6 1195.8L1113.8 1196.0L1114.1 1196.0L1114.3 1195.9L1114.6 1195.7L1114.8 1195.4L1115.0 1195.3L1115.3 1196.1L1115.5 1196.1L1115.8 1196.1L1116.0 1195.9L1116.2 1195.6L1116.5 1195.5L1116.7 1195.2L1117.0 1195.4L1117.2 1195.3L1117.4 1195.5L1117.7 1195.2L1117.9 1195.4L1118.2 1195.4L1118.4 1195.5L1118.6 1195.4L1118.9 1195.1L1119.1 1195.5L1119.4 1195.3L1119.6 1195.2L1119.9 1194.9L1120.1 1194.9L1120.3 1194.8L1120.6 1194.8L1120.8 1194.9L1121.1 1194.6L1121.3 1194.2L1121.5 1194.3L1121.8 1194.6L1122.0 1194.8L1122.3 1194.4L1122.5 1194.6L1122.7 1194.7L1123.0 1194.8L1123.2 1194.9L1123.5 1194.7L1123.7 1194.7L1123.9 1195.0L1124.2 1194.8L1124.4 1194.4L1124.7 1194.4L1124.9 1194.5L1125.1 1194.0L1125.4 1193.8L1125.6 1194.0L1125.9 1194.0L1126.1 1194.1L1126.3 1193.8L1126.6 1194.2L1126.8 1194.7L1127.1 1194.7L1127.3 1194.5L1127.5 1194.2L1127.8 1194.5L1128.0 1194.6L1128.3 1194.3L1128.5 1194.7L1128.7 1194.9L1129.0 1195.0L1129.2 1194.5L1129.5 1194.4L1129.7 1194.6L1129.9 1194.2L1130.2 1194.5L1130.4 1194.8L1130.7 1195.1L1130.9 1194.9L1131.1 1194.6L1131.4 1194.9L1131.6 1195.1L1131.9 1195.4L1132.1 1195.7L1132.3 1195.6L1132.6 1195.5L1132.8 1194.9L1133.1 1195.0L1133.3 1195.6L1133.5 1195.3L1133.8 1195.1L1134.0 1195.2L1134.3 1195.3L1134.5 1194.8L1134.8 1194.6L1135.0 1194.2L1135.2 1194.8L1135.5 1194.6L1135.7 1194.8L1136.0 1195.3L1136.2 1195.8L1136.4 1196.1L1136.7 1196.4L1136.9 1195.9L1137.2 1195.7L1137.4 1195.4L1137.6 1195.3L1137.9 1196.0L1138.1 1195.4L1138.4 1195.5L1138.6 1195.0L1138.8 1195.3L1139.1 1195.6L1139.3 1195.4L1139.6 1195.9L1139.8 1195.9L1140.0 1196.2L1140.3 1196.3L1140.5 1196.1L1140.8 1196.0L1141.0 1195.9L1141.2 1196.0L1141.5 1196.0L1141.7 1196.6L1142.0 1196.5L1142.2 1196.3L1142.4 1196.1L1142.7 1195.9L1142.9 1195.6L1143.2 1195.4L1143.4 1195.7L1143.6 1195.8L1143.9 1195.9L1144.1 1196.0L1144.4 1196.4L1144.6 1196.6L1144.8 1196.9L1145.1 1196.8L1145.3 1196.8L1145.6 1196.7L1145.8 1196.8L1146.0 1196.7L1146.3 1196.8L1146.5 1196.8L1146.8 1196.9L1147.0 1196.9L1147.2 1196.9L1147.5 1197.4L1147.7 1197.5L1148.0 1197.4L1148.2 1197.6L1148.5 1197.5L1148.7 1197.4L1148.9 1197.6L1149.2 1197.3L1149.4 1196.6L1149.7 1196.9L1149.9 1197.4L1150.1 1197.2L1150.4 1197.2L1150.6 1197.6L1150.9 1197.2L1151.1 1197.2L1151.3 1197.2L1151.6 1197.3L1151.8 1197.0L1152.1 1197.5L1152.3 1197.7L1152.5 1198.0L1152.8 1198.0L1153.0 1197.6L1153.3 1197.7L1153.5 1197.5L1153.7 1197.7L1154.0 1197.6L1154.2 1197.7L1154.5 1197.8L1154.7 1198.1L1154.9 1198.5L1155.2 1198.3L1155.4 1198.5L1155.7 1199.0L1155.9 1199.2L1156.1 1199.1L1156.4 1199.2L1156.6 1199.2L1156.9 1199.5L1157.1 1199.5L1157.3 1199.6L1157.6 1200.3L1157.8 1199.9L1158.1 1199.6L1158.3 1199.1L1158.5 1198.7L1158.8 1199.0L1159.0 1199.2L1159.3 1199.7L1159.5 1199.2L1159.7 1199.0L1160.0 1199.5L1160.2 1199.8L1160.5 1200.1L1160.7 1200.4L1160.9 1200.4L1161.2 1200.4L1161.4 1200.4L1161.7 1200.6L1161.9 1200.6L1162.2 1200.6L1162.4 1201.0L1162.6 1200.6L1162.9 1200.4L1163.1 1200.5L1163.4 1200.4L1163.6 1200.4L1163.8 1201.0L1164.1 1201.1L1164.3 1200.9L1164.6 1201.1L1164.8 1201.8L1165.0 1201.3L1165.3 1201.1L1165.5 1201.0L1165.8 1200.7L1166.0 1201.3L1166.2 1201.3L1166.5 1201.1L1166.7 1201.1L1167.0 1200.8L1167.2 1200.5L1167.4 1200.5L1167.7 1201.1L1167.9 1200.5L1168.2 1200.6L1168.4 1201.0L1168.6 1201.2L1168.9 1201.7L1169.1 1201.7L1169.4 1201.7L1169.6 1201.6L1169.8 1201.4L1170.1 1201.8L1170.3 1201.4L1170.6 1201.4L1170.8 1201.2L1171.0 1201.0L1171.3 1200.4L1171.5 1200.3L1171.8 1200.4L1172.0 1200.4L1172.2 1200.7L1172.5 1200.7L1172.7 1200.6L1173.0 1200.7L1173.2 1200.9L1173.4 1200.6L1173.7 1200.2L1173.9 1199.9L1174.2 1200.3L1174.4 1200.6L1174.6 1200.3L1174.9 1200.4L1175.1 1200.6L1175.4 1200.9L1175.6 1200.7L1175.9 1200.6L1176.1 1200.9L1176.3 1201.6L1176.6 1201.9L1176.8 1201.5L1177.1 1201.5L1177.3 1201.3L1177.5 1201.1L1177.8 1200.8L1178.0 1200.6L1178.3 1200.6L1178.5 1201.0L1178.7 1201.1L1179.0 1201.1L1179.2 1201.1L1179.5 1200.8L1179.7 1200.7L1179.9 1201.1L1180.2 1201.3L1180.4 1201.8L1180.7 1201.9L1180.9 1201.9L1181.1 1201.4L1181.4 1201.5L1181.6 1201.0L1181.9 1201.5L1182.1 1201.3L1182.3 1201.3L1182.6 1201.0L1182.8 1200.9L1183.1 1200.8L1183.3 1201.1L1183.5 1201.3L1183.8 1201.0L1184.0 1200.6L1184.3 1200.7L1184.5 1200.7L1184.7 1200.5L1185.0 1200.8L1185.2 1200.8L1185.5 1200.9L1185.7 1200.9L1185.9 1200.8L1186.2 1200.8L1186.4 1200.5L1186.7 1200.8L1186.9 1201.0L1187.1 1200.6L1187.4 1200.8L1187.6 1201.2L1187.9 1201.3L1188.1 1201.7L1188.3 1201.6L1188.6 1201.6L1188.8 1201.2L1189.1 1201.0L1189.3 1200.5L1189.6 1200.3L1189.8 1200.5L1190.0 1200.6L1190.3 1201.0L1190.5 1201.0L1190.8 1200.7L1191.0 1200.9L1191.2 1200.8L1191.5 1201.3L1191.7 1201.9L1192.0 1202.1L1192.2 1201.7L1192.4 1201.5L1192.7 1201.5L1192.9 1201.2L1193.2 1201.2L1193.4 1201.3L1193.6 1201.4L1193.9 1201.4L1194.1 1201.1L1194.4 1200.8L1194.6 1200.7L1194.8 1201.0L1195.1 1201.4L1195.3 1201.6L1195.6 1201.7L1195.8 1201.8L1196.0 1202.0L1196.3 1202.3L1196.5 1202.4L1196.8 1201.9L1197.0 1202.1L1197.2 1202.1L1197.5 1201.9L1197.7 1202.0L1198.0 1202.0L1198.2 1201.9L1198.4 1201.4L1198.7 1201.4L1198.9 1201.5L1199.2 1201.5L1199.4 1201.0L1199.6 1201.1L1199.9 1201.4L1200.1 1201.4L1200.4 1201.6L1200.6 1201.5L1200.8 1201.3L1201.1 1201.5L1201.3 1201.4L1201.6 1201.5L1201.8 1202.4L1202.0 1202.6L1202.3 1202.6L1202.5 1202.1L1202.8 1202.1L1203.0 1202.3L1203.3 1202.0L1203.5 1201.9L1203.7 1201.3L1204.0 1201.5L1204.2 1201.3L1204.5 1201.5L1204.7 1201.9L1204.9 1201.9L1205.2 1202.1L1205.4 1202.2L1205.7 1202.2L1205.9 1202.1L1206.1 1201.8L1206.4 1202.2L1206.6 1202.4L1206.9 1202.1L1207.1 1202.3L1207.3 1202.0L1207.6 1201.5L1207.8 1201.8L1208.1 1201.4L1208.3 1201.7L1208.5 1201.7L1208.8 1201.9L1209.0 1202.1L1209.3 1202.3L1209.5 1202.4L1209.7 1202.5L1210.0 1202.5L1210.2 1202.8L1210.5 1202.6L1210.7 1202.8L1210.9 1203.2L1211.2 1203.1L1211.4 1203.1L1211.7 1202.9L1211.9 1202.8L1212.1 1202.8L1212.4 1202.6L1212.6 1202.3L1212.9 1202.3L1213.1 1202.3L1213.3 1202.4L1213.6 1202.6L1213.8 1202.1L1214.1 1202.4L1214.3 1202.3L1214.5 1202.1L1214.8 1202.0L1215.0 1202.1L1215.3 1202.3L1215.5 1202.2L1215.7 1202.2L1216.0 1201.8L1216.2 1201.8L1216.5 1201.7L1216.7 1201.6L1217.0 1201.9L1217.2 1202.3L1217.4 1202.6L1217.7 1202.3L1217.9 1202.7L1218.2 1202.6L1218.4 1202.5L1218.6 1202.3L1218.9 1202.4L1219.1 1202.6L1219.4 1202.5L1219.6 1202.4L1219.8 1202.3L1220.1 1202.2L1220.3 1202.4L1220.6 1202.2L1220.8 1202.1L1221.0 1202.0L1221.3 1201.8L1221.5 1201.7L1221.8 1201.3L1222.0 1201.4L1222.2 1201.6L1222.5 1201.5L1222.7 1202.0L1223.0 1201.7L1223.2 1201.9L1223.4 1202.1L1223.7 1201.9L1223.9 1201.9L1224.2 1202.1L1224.4 1202.2L1224.6 1202.3L1224.9 1202.7L1225.1 1202.7L1225.4 1202.2L1225.6 1202.0L1225.8 1202.3L1226.1 1202.2L1226.3 1201.9L1226.6 1201.4L1226.8 1201.5L1227.0 1202.0L1227.3 1201.6L1227.5 1201.0L1227.8 1201.2L1228.0 1201.1L1228.2 1201.1L1228.5 1201.0L1228.7 1200.8L1229.0 1201.0L1229.2 1201.3L1229.4 1201.4L1229.7 1201.2L1229.9 1201.5L1230.2 1201.4L1230.4 1201.6L1230.7 1201.3L1230.9 1201.5L1231.1 1201.6L1231.4 1201.9L1231.6 1201.9L1231.9 1201.9L1232.1 1201.6L1232.3 1201.8L1232.6 1201.9L1232.8 1202.1L1233.1 1201.9L1233.3 1201.5L1233.5 1201.4L1233.8 1201.3L1234.0 1201.0L1234.3 1201.1L1234.5 1201.3L1234.7 1201.3L1235.0 1201.6L1235.2 1201.7L1235.5 1201.4L1235.7 1201.2L1235.9 1201.1L1236.2 1201.2L1236.4 1201.5L1236.7 1201.5L1236.9 1201.8L1237.1 1201.6L1237.4 1201.5L1237.6 1201.9L1237.9 1201.9L1238.1 1202.2L1238.3 1201.6L1238.6 1201.1L1238.8 1200.9L1239.1 1201.2L1239.3 1201.6L1239.5 1201.4L1239.8 1201.1L1240.0 1200.8L1240.3 1200.5L1240.5 1200.7L1240.7 1200.6L1241.0 1201.2L1241.2 1201.3L1241.5 1201.1L1241.7 1201.2L1241.9 1201.2L1242.2 1201.4L1242.4 1201.6L1242.7 1201.5L1242.9 1201.7L1243.1 1201.9L1243.4 1201.8L1243.6 1201.9L1243.9 1202.0L1244.1 1201.9L1244.4 1201.7L1244.6 1202.0L1244.8 1202.0L1245.1 1201.8L1245.3 1201.9L1245.6 1201.5L1245.8 1201.5L1246.0 1201.1L1246.3 1201.0L1246.5 1200.6L1246.8 1200.4L1247.0 1200.8L1247.2 1200.8L1247.5 1200.5L1247.7 1201.1L1248.0 1200.9L1248.2 1201.4L1248.4 1201.3L1248.7 1200.9L1248.9 1201.5L1249.2 1201.4L1249.4 1201.6L1249.6 1202.0L1249.9 1201.6L1250.1 1201.5L1250.4 1201.3L1250.6 1201.4L1250.8 1201.4L1251.1 1201.0L1251.3 1201.0L1251.6 1201.1L1251.8 1201.0L1252.0 1201.1L1252.3 1200.9L1252.5 1200.9L1252.8 1200.9L1253.0 1200.9L1253.2 1201.3L1253.5 1201.5L1253.7 1201.7L1254.0 1201.8L1254.2 1201.8L1254.4 1201.4L1254.7 1201.6L1254.9 1202.1L1255.2 1202.1L1255.4 1201.9L1255.6 1201.9L1255.9 1202.2L1256.1 1202.2L1256.4 1201.9L1256.6 1201.8L1256.8 1201.5L1257.1 1201.5L1257.3 1201.3L1257.6 1201.1L1257.8 1201.5L1258.1 1201.8L1258.3 1201.4L1258.5 1201.2L1258.8 1201.2L1259.0 1201.2L1259.3 1200.9L1259.5 1201.3L1259.7 1200.9L1260.0 1201.2L1260.2 1201.5L1260.5 1201.5L1260.7 1201.4L1260.9 1201.4L1261.2 1201.5L1261.4 1201.0L1261.7 1200.7L1261.9 1200.9L1262.1 1200.9L1262.4 1200.9L1262.6 1200.6L1262.9 1200.5L1263.1 1200.3L1263.3 1201.2L1263.6 1200.9L1263.8 1201.3L1264.1 1201.5L1264.3 1201.6L1264.5 1201.6L1264.8 1201.5L1265.0 1202.0L1265.3 1202.1L1265.5 1202.1L1265.7 1202.0L1266.0 1202.0L1266.2 1201.7L1266.5 1201.6L1266.7 1201.4L1266.9 1201.6L1267.2 1201.8L1267.4 1201.3L1267.7 1201.2L1267.9 1201.5L1268.1 1201.2L1268.4 1200.9L1268.6 1201.3L1268.9 1201.3L1269.1 1201.2L1269.3 1201.0L1269.6 1201.1L1269.8 1201.0L1270.1 1201.1L1270.3 1201.3L1270.5 1201.5L1270.8 1201.5L1271.0 1201.3L1271.3 1201.4L1271.5 1201.4L1271.8 1201.4L1272.0 1201.3L1272.2 1201.3L1272.5 1201.1L1272.7 1201.0L1273.0 1201.1L1273.2 1201.4L1273.4 1201.2L1273.7 1201.4L1273.9 1201.5L1274.2 1201.5L1274.4 1201.7L1274.6 1201.6L1274.9 1201.7L1275.1 1201.8L1275.4 1200.8L1275.6 1200.9L1275.8 1201.1L1276.1 1201.7L1276.3 1201.3L1276.6 1201.4L1276.8 1201.5L1277.0 1201.2L1277.3 1201.5L1277.5 1201.7L1277.8 1201.4L1278.0 1201.1L1278.2 1201.0L1278.5 1201.7L1278.7 1202.3L1279.0 1201.5L1279.2 1201.0L1279.4 1201.2L1279.7 1201.2L1279.9 1201.1L1280.2 1201.3L1280.4 1201.4L1280.6 1201.5L1280.9 1201.6L1281.1 1201.4L1281.4 1201.8L1281.6 1201.7L1281.8 1202.0L1282.1 1202.2L1282.3 1202.3L1282.6 1202.4L1282.8 1202.3L1283.0 1201.9L1283.3 1201.8L1283.5 1202.0L1283.8 1201.6L1284.0 1201.2L1284.2 1201.6L1284.5 1201.9L1284.7 1201.6L1285.0 1201.8L1285.2 1201.9L1285.5 1202.3L1285.7 1202.3L1285.9 1202.3L1286.2 1202.2L1286.4 1202.3L1286.7 1202.3L1286.9 1202.2L1287.1 1202.2L1287.4 1202.0L1287.6 1202.3L1287.9 1202.0L1288.1 1201.7L1288.3 1201.5L1288.6 1201.9L1288.8 1201.9L1289.1 1202.2L1289.3 1202.4L1289.5 1202.3L1289.8 1202.6L1290.0 1202.8L1290.3 1202.9L1290.5 1202.8L1290.7 1202.9L1291.0 1202.6L1291.2 1202.6L1291.5 1202.5L1291.7 1202.7L1291.9 1202.8L1292.2 1202.7L1292.4 1203.0L1292.7 1203.3L1292.9 1203.4L1293.1 1203.2L1293.4 1203.4L1293.6 1202.7L1293.9 1202.6L1294.1 1202.8L1294.3 1203.5L1294.6 1203.3L1294.8 1203.7L1295.1 1204.3L1295.3 1204.8L1295.5 1204.1L1295.8 1204.4L1296.0 1204.4L1296.3 1204.7L1296.5 1204.7L1296.7 1204.5L1297.0 1204.5L1297.2 1204.9L1297.5 1205.2L1297.7 1205.1L1297.9 1205.2L1298.2 1205.5L1298.4 1205.6L1298.7 1205.6L1298.9 1205.5L1299.2 1205.3L1299.4 1205.2L1299.6 1205.0L1299.9 1204.6L1300.1 1204.3L1300.4 1204.6L1300.6 1204.4L1300.8 1204.1L1301.1 1204.2L1301.3 1204.7L1301.6 1205.2L1301.8 1205.1L1302.0 1204.9L1302.3 1204.9L1302.5 1204.8L1302.8 1204.7L1303.0 1204.9L1303.2 1204.8L1303.5 1204.7L1303.7 1204.7L1304.0 1204.8L1304.2 1204.7L1304.4 1204.7" stroke="#ff7043" stroke-width="3.9" fill="none" stroke-linejoin="round"/></g><circle cx="1304.4" cy="1204.7" r="7.4" fill="#ff7043"/></svg>
<div class="t" style="left:784.20px;top:948.00px;font-size:25.4px;color:#2b2a38;transform:scaleX(0.9878);-webkit-text-stroke:0.5px #fff;">200</div>
<div class="t" style="left:783.54px;top:998.00px;font-size:25.4px;color:#2b2a38;transform:scaleX(1.0037);-webkit-text-stroke:0.5px #fff;">160</div>
<div class="t" style="left:783.54px;top:1048.00px;font-size:25.4px;color:#2b2a38;transform:scaleX(1.0037);-webkit-text-stroke:0.5px #fff;">120</div>
<div class="t" style="left:777.66px;top:1099.00px;font-size:25.4px;color:#2b2a38;transform:scaleX(0.9789);-webkit-text-stroke:0.5px #fff;">80.0</div>
<div class="t" style="left:778.16px;top:1149.00px;font-size:25.4px;color:#2b2a38;transform:scaleX(0.9686);-webkit-text-stroke:0.5px #fff;">40.0</div>
<div class="t" style="left:777.78px;top:1199.00px;font-size:25.4px;color:#2b2a38;transform:scaleX(0.9763);-webkit-text-stroke:0.5px #fff;">0.00</div>
<div class="t" style="left:863.01px;top:1256.00px;font-size:25.4px;color:#2b2a38;transform:scaleX(0.9651);-webkit-text-stroke:0.5px #fff;">0.000</div>
<div class="t" style="left:959.52px;top:1256.00px;font-size:25.4px;color:#2b2a38;transform:scaleX(0.9592);-webkit-text-stroke:0.5px #fff;">400.0</div>
<div class="t" style="left:1055.17px;top:1256.00px;font-size:25.4px;color:#2b2a38;transform:scaleX(0.9671);-webkit-text-stroke:0.5px #fff;">800.0</div>
<div class="t" style="left:1144.93px;top:1256.00px;font-size:25.4px;color:#2b2a38;transform:scaleX(0.9492);-webkit-text-stroke:0.5px #fff;">1.200k</div>
<div class="t" style="left:1241.07px;top:1256.00px;font-size:25.4px;color:#2b2a38;transform:scaleX(0.9492);-webkit-text-stroke:0.5px #fff;">1.600k</div>
<div class="b" style="left:-30px;top:0px;width:2834px;height:109.6px;background:#f57c20;box-shadow:0 5px 8px -1px rgba(0,0,0,0.42)"></div>
<div class="t" style="left:42.47px;top:26.00px;font-size:40px;color:#fff;transform:scaleX(0.9707);-webkit-text-stroke:0.5px #fff;">TensorBoard</div>
<div class="t" style="left:1057.98px;top:33.00px;font-size:28px;color:#fff;transform:scaleX(0.9323);-webkit-text-stroke:0.9px #fff;">SCALARS</div>
<div class="t" style="left:1274.76px;top:33.00px;font-size:28px;color:rgba(255,255,255,0.8);transform:scaleX(0.9495);-webkit-text-stroke:0.9px rgba(255,255,255,0.8);">IMAGES</div>
<div class="t" style="left:1473.45px;top:33.00px;font-size:28px;color:rgba(255,255,255,0.8);transform:scaleX(0.9171);-webkit-text-stroke:0.9px rgba(255,255,255,0.8);">AUDIO</div>
<div class="t" style="left:1649.54px;top:33.00px;font-size:28px;color:rgba(255,255,255,0.8);transform:scaleX(0.9363);-webkit-text-stroke:0.9px rgba(255,255,255,0.8);">GRAPHS</div>
<div class="t" style="left:1853.64px;top:33.00px;font-size:28px;color:rgba(255,255,255,0.8);transform:scaleX(0.9431);-webkit-text-stroke:0.9px rgba(255,255,255,0.8);">DISTRIBUTIONS</div>
<div class="t" style="left:2150.82px;top:33.00px;font-size:28px;color:rgba(255,255,255,0.8);transform:scaleX(0.9511);-webkit-text-stroke:0.9px rgba(255,255,255,0.8);">HISTOGRAMS</div>
<div class="t" style="left:2422.76px;top:33.00px;font-size:28px;color:rgba(255,255,255,0.8);transform:scaleX(0.9333);-webkit-text-stroke:0.9px rgba(255,255,255,0.8);">EMBEDDINGS</div>
<div class="t" style="left:2693.43px;top:33.00px;font-size:28px;color:rgba(255,255,255,0.8);transform:scaleX(0.9231);-webkit-text-stroke:0.9px rgba(255,255,255,0.8);">TEXT</div>
<div class="b" style="left:1010px;top:106px;width:217px;height:3.5px;background:#fff"></div>
</body></html>
